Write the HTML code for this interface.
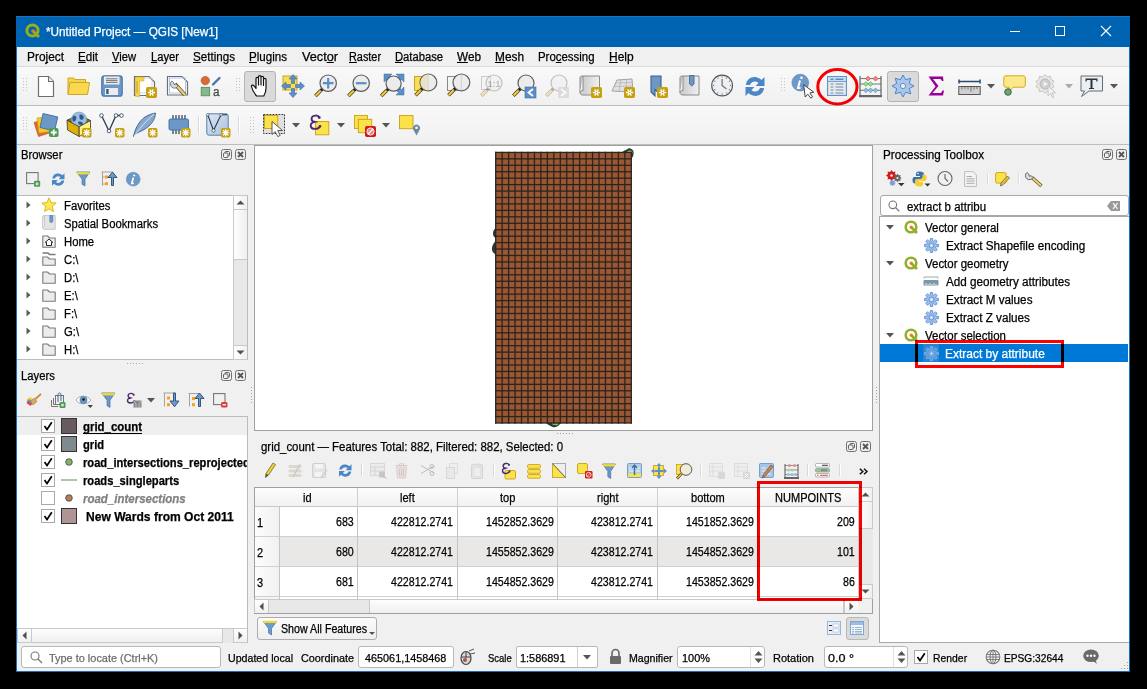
<!DOCTYPE html>
<html><head><meta charset="utf-8"><style>
html,body{margin:0;padding:0;}
body{width:1147px;height:689px;overflow:hidden;background:#000;position:relative;font-family:"Liberation Sans",sans-serif;}
.a{position:absolute;}
.t{position:absolute;transform-origin:0 0;text-decoration-skip-ink:none;-webkit-text-stroke:0.25px currentColor;white-space:nowrap;line-height:1;color:#000;font-family:"Liberation Sans",sans-serif;}
svg.a{overflow:visible;}
</style></head><body>
<div class="a" style="left:16px;top:16px;width:1114px;height:656px;background:#f0f0f0;"></div>
<div class="a" style="left:16px;top:16px;width:1px;height:656px;background:#1a6fc4;"></div>
<div class="a" style="left:1129px;top:16px;width:1px;height:656px;background:#1a6fc4;"></div>
<div class="a" style="left:16px;top:671px;width:1114px;height:1px;background:#1a6fc4;"></div>
<div class="a" style="left:16px;top:16px;width:1114px;height:31px;background:#0063b1;"></div>
<div class="a" style="left:16px;top:16px;width:1114px;height:1px;background:#1b73c2;"></div>
<svg class="a" style="left:25px;top:23px;" width="16" height="16" viewBox="0 0 16 16"><circle cx="7.5" cy="7.5" r="5.6" fill="none" stroke="#93b023" stroke-width="3"/><path d="M8 8 L14 14" stroke="#93b023" stroke-width="3"/><circle cx="8" cy="8" r="1.8" fill="#ee7913"/></svg>
<div class="t" style="left:46px;top:26px;font-size:12px;transform:scaleX(0.9806);color:#fff;">*Untitled Project — QGIS [New1]</div>
<div class="a" style="left:1010px;top:31px;width:10px;height:1px;background:#fff;"></div>
<div class="a" style="left:1055px;top:26px;width:10px;height:10px;border:1px solid #fff;box-sizing:border-box;"></div>
<svg class="a" style="left:1101px;top:26px;" width="10" height="10" viewBox="0 0 10 10"><path d="M0 0 L10 10 M10 0 L0 10" stroke="#fff" stroke-width="1.1"/></svg>
<div class="a" style="left:17px;top:47px;width:1112px;height:19px;background:#f0f0f0;"></div>
<div class="a" style="left:17px;top:66px;width:1112px;height:1px;background:#dadada;"></div>
<div class="t" style="left:27px;top:51px;font-size:12px;transform:scaleX(0.9907);text-decoration-thickness:1px;text-underline-offset:1px;">Pro<u>j</u>ect</div>
<div class="t" style="left:78px;top:51px;font-size:12px;transform:scaleX(0.9672);text-decoration-thickness:1px;text-underline-offset:1px;"><u>E</u>dit</div>
<div class="t" style="left:112px;top:51px;font-size:12px;transform:scaleX(0.9305);text-decoration-thickness:1px;text-underline-offset:1px;"><u>V</u>iew</div>
<div class="t" style="left:151px;top:51px;font-size:12px;transform:scaleX(0.9328);text-decoration-thickness:1px;text-underline-offset:1px;"><u>L</u>ayer</div>
<div class="t" style="left:193px;top:51px;font-size:12px;transform:scaleX(0.9686);text-decoration-thickness:1px;text-underline-offset:1px;"><u>S</u>ettings</div>
<div class="t" style="left:249px;top:51px;font-size:12px;transform:scaleX(0.9655);text-decoration-thickness:1px;text-underline-offset:1px;"><u>P</u>lugins</div>
<div class="t" style="left:302px;top:51px;font-size:12px;transform:scaleX(1.0582);text-decoration-thickness:1px;text-underline-offset:1px;">Vect<u>o</u>r</div>
<div class="t" style="left:349px;top:51px;font-size:12px;transform:scaleX(0.9054);text-decoration-thickness:1px;text-underline-offset:1px;"><u>R</u>aster</div>
<div class="t" style="left:395px;top:51px;font-size:12px;transform:scaleX(0.9344);text-decoration-thickness:1px;text-underline-offset:1px;"><u>D</u>atabase</div>
<div class="t" style="left:457px;top:51px;font-size:12px;transform:scaleX(0.9813);text-decoration-thickness:1px;text-underline-offset:1px;"><u>W</u>eb</div>
<div class="t" style="left:495px;top:51px;font-size:12px;transform:scaleX(0.9883);text-decoration-thickness:1px;text-underline-offset:1px;"><u>M</u>esh</div>
<div class="t" style="left:538px;top:51px;font-size:12px;transform:scaleX(0.9518);text-decoration-thickness:1px;text-underline-offset:1px;">Pro<u>c</u>essing</div>
<div class="t" style="left:609px;top:51px;font-size:12px;transform:scaleX(0.9968);text-decoration-thickness:1px;text-underline-offset:1px;"><u>H</u>elp</div>
<div class="a" style="left:17px;top:67px;width:1112px;height:38px;background:linear-gradient(#f9f9f9,#f0f0f0);"></div>
<div class="a" style="left:17px;top:105px;width:1112px;height:1px;background:#bdbdbd;"></div>
<div class="a" style="left:17px;top:106px;width:1112px;height:38px;background:linear-gradient(#f9f9f9,#f0f0f0);"></div>
<div class="a" style="left:17px;top:144px;width:1112px;height:1px;background:#bdbdbd;"></div>
<div class="t" style="left:21px;top:149px;font-size:12px;transform:scaleX(0.9407);">Browser</div>
<svg class="a" style="left:221px;top:149px;" width="11" height="11" viewBox="0 0 11 11"><rect x="0.5" y="0.5" width="10" height="10" rx="2" fill="none" stroke="#707070"/><rect x="4" y="2.5" width="4.5" height="4.5" rx="1" fill="none" stroke="#606060"/><rect x="2.5" y="4" width="4.5" height="4.5" rx="1" fill="#f0f0f0" stroke="#606060"/></svg>
<svg class="a" style="left:235px;top:149px;" width="11" height="11" viewBox="0 0 11 11"><rect x="0.5" y="0.5" width="10" height="10" rx="2" fill="none" stroke="#707070"/><path d="M3 3 L8 8 M8 3 L3 8" stroke="#555" stroke-width="1.8"/></svg>
<div class="a" style="left:17px;top:195px;width:231px;height:165px;background:#fff;border:1px solid #bcbcbc;border-left:none;box-sizing:border-box;"></div>
<svg class="a" style="left:26px;top:201px;" width="5" height="8" viewBox="0 0 5 8"><path d="M0.5 0.5 L4.5 4 L0.5 7.5Z" fill="#5a5a5a"/></svg>
<div class="t" style="left:63.5px;top:200px;font-size:12px;transform:scaleX(0.9400);">Favorites</div>
<svg class="a" style="left:26px;top:219px;" width="5" height="8" viewBox="0 0 5 8"><path d="M0.5 0.5 L4.5 4 L0.5 7.5Z" fill="#5a5a5a"/></svg>
<div class="t" style="left:63.5px;top:218px;font-size:12px;transform:scaleX(0.9400);">Spatial Bookmarks</div>
<svg class="a" style="left:26px;top:237px;" width="5" height="8" viewBox="0 0 5 8"><path d="M0.5 0.5 L4.5 4 L0.5 7.5Z" fill="#5a5a5a"/></svg>
<div class="t" style="left:63.5px;top:236px;font-size:12px;transform:scaleX(0.9400);">Home</div>
<svg class="a" style="left:26px;top:255px;" width="5" height="8" viewBox="0 0 5 8"><path d="M0.5 0.5 L4.5 4 L0.5 7.5Z" fill="#5a5a5a"/></svg>
<div class="t" style="left:63.5px;top:254px;font-size:12px;transform:scaleX(0.9400);">C:\</div>
<svg class="a" style="left:26px;top:273px;" width="5" height="8" viewBox="0 0 5 8"><path d="M0.5 0.5 L4.5 4 L0.5 7.5Z" fill="#5a5a5a"/></svg>
<div class="t" style="left:63.5px;top:272px;font-size:12px;transform:scaleX(0.9400);">D:\</div>
<svg class="a" style="left:26px;top:291px;" width="5" height="8" viewBox="0 0 5 8"><path d="M0.5 0.5 L4.5 4 L0.5 7.5Z" fill="#5a5a5a"/></svg>
<div class="t" style="left:63.5px;top:290px;font-size:12px;transform:scaleX(0.9400);">E:\</div>
<svg class="a" style="left:26px;top:309px;" width="5" height="8" viewBox="0 0 5 8"><path d="M0.5 0.5 L4.5 4 L0.5 7.5Z" fill="#5a5a5a"/></svg>
<div class="t" style="left:63.5px;top:308px;font-size:12px;transform:scaleX(0.9400);">F:\</div>
<svg class="a" style="left:26px;top:327px;" width="5" height="8" viewBox="0 0 5 8"><path d="M0.5 0.5 L4.5 4 L0.5 7.5Z" fill="#5a5a5a"/></svg>
<div class="t" style="left:63.5px;top:326px;font-size:12px;transform:scaleX(0.9400);">G:\</div>
<svg class="a" style="left:26px;top:345px;" width="5" height="8" viewBox="0 0 5 8"><path d="M0.5 0.5 L4.5 4 L0.5 7.5Z" fill="#5a5a5a"/></svg>
<div class="t" style="left:63.5px;top:344px;font-size:12px;transform:scaleX(0.9400);">H:\</div>
<svg class="a" style="left:41px;top:197px;" width="16" height="16" viewBox="0 0 16 16"><path d="M8 0.8 L10.1 5.6 L15.2 6 L11.3 9.3 L12.5 14.6 L8 11.8 L3.5 14.6 L4.7 9.3 L0.8 6 L5.9 5.6Z" fill="#fce94f" stroke="#d8b01a" stroke-width="0.9" stroke-linejoin="round"/></svg>
<svg class="a" style="left:42px;top:215px;" width="14" height="15" viewBox="0 0 14 15"><path d="M2.5 0.5 H13.2 V14.3 H2.5 C1.2 14.3 0.6 13.6 0.6 12.5 V1.8 C0.6 1 1.2 0.5 2 0.5Z" fill="#e4e4e4" stroke="#c4c4c4" stroke-width="0.9"/><path d="M0.6 12.5 C0.6 11.5 1.2 11 2.5 11 V0.5" fill="#f4f4f4" stroke="#c4c4c4" stroke-width="0.9"/><path d="M7.8 0.5 H10.8 V6.5 L9.3 8 L7.8 6.5Z" fill="#6c98c8" stroke="#4a77aa" stroke-width="0.6"/></svg>
<svg class="a" style="left:42px;top:235px;" width="14" height="13" viewBox="0 0 14 13"><path d="M0.8 12.2 V1 H5.5 L7.5 3 H13.2 V12.2Z" fill="#f0f0f0" stroke="#7a7a7a" stroke-width="1.1" stroke-linejoin="round"/><path d="M4.5 10.5 V7.3 H3.3 L7 4 L10.7 7.3 H9.5 V10.5Z" fill="#fff" stroke="#111" stroke-width="0.9" stroke-linejoin="round"/></svg>
<svg class="a" style="left:42px;top:252px;" width="14" height="14" viewBox="0 0 14 14"><path d="M0.5 1 H6 L7.5 2.5 H13.5" fill="none" stroke="#7a7a7a" stroke-width="1.6"/><path d="M0.8 13.2 V5 H5.5 L7.5 7 H13.2 V13.2Z" fill="#ececec" stroke="#7a7a7a" stroke-width="1.1" stroke-linejoin="round"/></svg>
<svg class="a" style="left:42px;top:271px;" width="14" height="13" viewBox="0 0 14 13"><path d="M0.8 12.2 V1 H5.5 L7.5 3 H13.2 V12.2Z" fill="#ececec" stroke="#7a7a7a" stroke-width="1.1" stroke-linejoin="round"/></svg>
<svg class="a" style="left:42px;top:289px;" width="14" height="13" viewBox="0 0 14 13"><path d="M0.8 12.2 V1 H5.5 L7.5 3 H13.2 V12.2Z" fill="#ececec" stroke="#7a7a7a" stroke-width="1.1" stroke-linejoin="round"/></svg>
<svg class="a" style="left:42px;top:307px;" width="14" height="13" viewBox="0 0 14 13"><path d="M0.8 12.2 V1 H5.5 L7.5 3 H13.2 V12.2Z" fill="#ececec" stroke="#7a7a7a" stroke-width="1.1" stroke-linejoin="round"/></svg>
<svg class="a" style="left:42px;top:325px;" width="14" height="13" viewBox="0 0 14 13"><path d="M0.8 12.2 V1 H5.5 L7.5 3 H13.2 V12.2Z" fill="#ececec" stroke="#7a7a7a" stroke-width="1.1" stroke-linejoin="round"/></svg>
<svg class="a" style="left:42px;top:343px;" width="14" height="13" viewBox="0 0 14 13"><path d="M0.8 12.2 V1 H5.5 L7.5 3 H13.2 V12.2Z" fill="#ececec" stroke="#7a7a7a" stroke-width="1.1" stroke-linejoin="round"/></svg>
<div class="a" style="left:233px;top:195px;width:15px;height:165px;background:#e8e8e8;border-left:1px solid #c9c9c9;box-sizing:border-box;"></div>
<div class="a" style="left:233px;top:195px;width:15px;height:15px;background:linear-gradient(90deg,#fff,#f0f0f0);border:1px solid #c9c9c9;box-sizing:border-box;"></div>
<svg class="a" style="left:236px;top:200px;" width="9" height="5" viewBox="0 0 9 5"><path d="M0.5 4.5 L4.5 0.5 L8.5 4.5Z" fill="#505050"/></svg>
<div class="a" style="left:233px;top:345px;width:15px;height:15px;background:linear-gradient(90deg,#fff,#f0f0f0);border:1px solid #c9c9c9;box-sizing:border-box;"></div>
<svg class="a" style="left:236px;top:350px;" width="9" height="5" viewBox="0 0 9 5"><path d="M0.5 0.5 L4.5 4.5 L8.5 0.5Z" fill="#505050"/></svg>
<div class="a" style="left:233px;top:209px;width:15px;height:51px;background:linear-gradient(90deg,#fdfdfd,#f0f0f0);border:1px solid #c9c9c9;box-sizing:border-box;"></div>
<div class="a" style="left:247px;top:195px;width:1px;height:165px;background:#bcbcbc;"></div>
<div class="a" style="left:127px;top:363px;width:1px;height:1px;background:#a8a8a8;"></div>
<div class="a" style="left:130px;top:363px;width:1px;height:1px;background:#a8a8a8;"></div>
<div class="a" style="left:133px;top:363px;width:1px;height:1px;background:#a8a8a8;"></div>
<div class="a" style="left:136px;top:363px;width:1px;height:1px;background:#a8a8a8;"></div>
<div class="a" style="left:139px;top:363px;width:1px;height:1px;background:#a8a8a8;"></div>
<div class="a" style="left:142px;top:363px;width:1px;height:1px;background:#a8a8a8;"></div>
<div class="t" style="left:21px;top:370px;font-size:12px;transform:scaleX(0.9400);">Layers</div>
<svg class="a" style="left:221px;top:370px;" width="11" height="11" viewBox="0 0 11 11"><rect x="0.5" y="0.5" width="10" height="10" rx="2" fill="none" stroke="#707070"/><rect x="4" y="2.5" width="4.5" height="4.5" rx="1" fill="none" stroke="#606060"/><rect x="2.5" y="4" width="4.5" height="4.5" rx="1" fill="#f0f0f0" stroke="#606060"/></svg>
<svg class="a" style="left:235px;top:370px;" width="11" height="11" viewBox="0 0 11 11"><rect x="0.5" y="0.5" width="10" height="10" rx="2" fill="none" stroke="#707070"/><path d="M3 3 L8 8 M8 3 L3 8" stroke="#555" stroke-width="1.8"/></svg>
<div class="a" style="left:17px;top:416px;width:231px;height:227px;background:#fff;border:1px solid #bcbcbc;border-left:none;border-bottom:none;box-sizing:border-box;"></div>
<div class="a" style="left:17px;top:417px;width:230px;height:18px;background:#efefef;"></div>
<div class="a" style="left:0;top:0;width:1147px;height:689px;clip-path:inset(417px 900px 61px 17px);">
<div class="a" style="left:41px;top:419px;width:14px;height:14px;background:#fff;border:1px solid #a8a8a8;box-sizing:border-box;"></div>
<svg class="a" style="left:43px;top:421px;" width="10" height="10" viewBox="0 0 10 10"><path d="M1.5 5 L4 8.5 L8.8 1.2" fill="none" stroke="#000" stroke-width="1.7"/></svg>
<div class="a" style="left:61px;top:418px;width:16px;height:16px;background:#675b5d;border:1px solid #333;box-sizing:border-box;"></div>
<div class="t" style="left:83px;top:421px;font-size:12px;transform:scaleX(0.9517);font-weight:bold;text-decoration-thickness:1px;text-underline-offset:1.5px;"><u>grid_count</u></div>
<div class="a" style="left:41px;top:437px;width:14px;height:14px;background:#fff;border:1px solid #a8a8a8;box-sizing:border-box;"></div>
<svg class="a" style="left:43px;top:439px;" width="10" height="10" viewBox="0 0 10 10"><path d="M1.5 5 L4 8.5 L8.8 1.2" fill="none" stroke="#000" stroke-width="1.7"/></svg>
<div class="a" style="left:61px;top:436px;width:16px;height:16px;background:#7e8a8e;border:1px solid #333;box-sizing:border-box;"></div>
<div class="t" style="left:83px;top:439px;font-size:12px;transform:scaleX(0.9300);font-weight:bold;">grid</div>
<div class="a" style="left:41px;top:455px;width:14px;height:14px;background:#fff;border:1px solid #a8a8a8;box-sizing:border-box;"></div>
<svg class="a" style="left:43px;top:457px;" width="10" height="10" viewBox="0 0 10 10"><path d="M1.5 5 L4 8.5 L8.8 1.2" fill="none" stroke="#000" stroke-width="1.7"/></svg>
<svg class="a" style="left:65px;top:458px;" width="8" height="8" viewBox="0 0 8 8"><circle cx="4" cy="4" r="3.3" fill="#80b36a" stroke="#444" stroke-width="0.8"/></svg>
<div class="t" style="left:83px;top:457px;font-size:12px;transform:scaleX(0.9300);font-weight:bold;">road_intersections_reprojected</div>
<div class="a" style="left:41px;top:473px;width:14px;height:14px;background:#fff;border:1px solid #a8a8a8;box-sizing:border-box;"></div>
<svg class="a" style="left:43px;top:475px;" width="10" height="10" viewBox="0 0 10 10"><path d="M1.5 5 L4 8.5 L8.8 1.2" fill="none" stroke="#000" stroke-width="1.7"/></svg>
<div class="a" style="left:61px;top:479px;width:16px;height:2px;background:#a9c8a8;"></div>
<div class="t" style="left:83px;top:475px;font-size:12px;transform:scaleX(0.9300);font-weight:bold;">roads_singleparts</div>
<div class="a" style="left:41px;top:491px;width:14px;height:14px;background:#fff;border:1px solid #a8a8a8;box-sizing:border-box;"></div>
<svg class="a" style="left:65px;top:494px;" width="8" height="8" viewBox="0 0 8 8"><circle cx="4" cy="4" r="3.3" fill="#b47a5a" stroke="#444" stroke-width="0.8"/></svg>
<div class="t" style="left:83px;top:493px;font-size:12px;transform:scaleX(0.9570);color:#808080;font-weight:bold;font-style:italic;">road_intersections</div>
<div class="a" style="left:41px;top:509px;width:14px;height:14px;background:#fff;border:1px solid #a8a8a8;box-sizing:border-box;"></div>
<svg class="a" style="left:43px;top:511px;" width="10" height="10" viewBox="0 0 10 10"><path d="M1.5 5 L4 8.5 L8.8 1.2" fill="none" stroke="#000" stroke-width="1.7"/></svg>
<div class="a" style="left:61px;top:508px;width:16px;height:16px;background:#b09393;border:1px solid #333;box-sizing:border-box;"></div>
<div class="t" style="left:86.3px;top:511px;font-size:12px;transform:scaleX(1.0052);font-weight:bold;">New Wards from Oct 2011</div>
</div>
<div class="a" style="left:17px;top:628px;width:231px;height:15px;background:#e8e8e8;border-top:1px solid #c9c9c9;box-sizing:border-box;"></div>
<div class="a" style="left:31px;top:628px;width:192px;height:15px;background:linear-gradient(#fdfdfd,#f0f0f0);border:1px solid #c9c9c9;box-sizing:border-box;"></div>
<div class="a" style="left:17px;top:628px;width:15px;height:15px;background:linear-gradient(#fff,#f0f0f0);border:1px solid #c9c9c9;box-sizing:border-box;"></div>
<svg class="a" style="left:22px;top:631px;" width="5" height="9" viewBox="0 0 5 9"><path d="M4.5 0.5 L0.5 4.5 L4.5 8.5Z" fill="#505050"/></svg>
<div class="a" style="left:233px;top:628px;width:15px;height:15px;background:linear-gradient(#fff,#f0f0f0);border:1px solid #c9c9c9;box-sizing:border-box;"></div>
<svg class="a" style="left:238px;top:631px;" width="5" height="9" viewBox="0 0 5 9"><path d="M0.5 0.5 L4.5 4.5 L0.5 8.5Z" fill="#505050"/></svg>
<div class="a" style="left:247px;top:416px;width:1px;height:227px;background:#bcbcbc;"></div>
<div class="a" style="left:254px;top:145px;width:619px;height:286px;background:#fff;border:1px solid #a0a0a0;box-sizing:border-box;"></div>
<svg class="a" style="left:620px;top:146px;" width="16" height="14" viewBox="0 0 16 14"><path d="M1.5 7 C3 5 5 4 7 3.5 C8 2 10 1.8 11.5 3 C13.5 4 14 6 13.5 8 C13.5 10 12.5 11.5 11.8 12 L11.5 6.8 Z" fill="#2f3a2f"/><path d="M6.5 6.2 C8 4.5 10 3.8 11.8 5 C12.5 5.8 12.6 6.5 12.3 7 H6.5Z" fill="#86c86a"/></svg>
<svg class="a" style="left:491px;top:226px;" width="6" height="30" viewBox="0 0 6 30"><path d="M5 2 C2 4 1.5 7 2.5 10 C3 11 4 11.5 5 12Z M5 15 C2 17 0.5 21 1 24 C1.5 26 3 27.5 5 28.5Z" fill="#2e3a30"/></svg>
<svg class="a" style="left:545px;top:418px;" width="17" height="11" viewBox="0 0 17 11"><path d="M1.5 5 C3 7 6 8.5 8.5 9.2 C11 9.5 13.5 8 15 6 L14.5 4 H2Z" fill="#2e3a30"/><path d="M7 6.3 C9 7.5 11.5 7.8 13.2 6.5 L12.8 5 H7Z" fill="#7cc06a"/></svg>
<svg class="a" style="left:494px;top:151px;" width="140" height="275" viewBox="0 0 140 275"><rect x="1.70" y="1.40" width="135.60" height="270.60" fill="#9b5731"/><rect x="1.05" y="0.75" width="1.3" height="271.90" fill="#2b2421"/><rect x="7.51" y="0.75" width="1.3" height="271.90" fill="#2b2421"/><rect x="13.96" y="0.75" width="1.3" height="271.90" fill="#2b2421"/><rect x="20.42" y="0.75" width="1.3" height="271.90" fill="#2b2421"/><rect x="26.88" y="0.75" width="1.3" height="271.90" fill="#2b2421"/><rect x="33.34" y="0.75" width="1.3" height="271.90" fill="#2b2421"/><rect x="39.79" y="0.75" width="1.3" height="271.90" fill="#2b2421"/><rect x="46.25" y="0.75" width="1.3" height="271.90" fill="#2b2421"/><rect x="52.71" y="0.75" width="1.3" height="271.90" fill="#2b2421"/><rect x="59.16" y="0.75" width="1.3" height="271.90" fill="#2b2421"/><rect x="65.62" y="0.75" width="1.3" height="271.90" fill="#2b2421"/><rect x="72.08" y="0.75" width="1.3" height="271.90" fill="#2b2421"/><rect x="78.54" y="0.75" width="1.3" height="271.90" fill="#2b2421"/><rect x="84.99" y="0.75" width="1.3" height="271.90" fill="#2b2421"/><rect x="91.45" y="0.75" width="1.3" height="271.90" fill="#2b2421"/><rect x="97.91" y="0.75" width="1.3" height="271.90" fill="#2b2421"/><rect x="104.36" y="0.75" width="1.3" height="271.90" fill="#2b2421"/><rect x="110.82" y="0.75" width="1.3" height="271.90" fill="#2b2421"/><rect x="117.28" y="0.75" width="1.3" height="271.90" fill="#2b2421"/><rect x="123.74" y="0.75" width="1.3" height="271.90" fill="#2b2421"/><rect x="130.19" y="0.75" width="1.3" height="271.90" fill="#2b2421"/><rect x="136.65" y="0.75" width="1.3" height="271.90" fill="#2b2421"/><rect x="1.05" y="0.75" width="136.90" height="1.3" fill="#2b2421"/><rect x="1.05" y="7.19" width="136.90" height="1.3" fill="#2b2421"/><rect x="1.05" y="13.64" width="136.90" height="1.3" fill="#2b2421"/><rect x="1.05" y="20.08" width="136.90" height="1.3" fill="#2b2421"/><rect x="1.05" y="26.52" width="136.90" height="1.3" fill="#2b2421"/><rect x="1.05" y="32.96" width="136.90" height="1.3" fill="#2b2421"/><rect x="1.05" y="39.41" width="136.90" height="1.3" fill="#2b2421"/><rect x="1.05" y="45.85" width="136.90" height="1.3" fill="#2b2421"/><rect x="1.05" y="52.29" width="136.90" height="1.3" fill="#2b2421"/><rect x="1.05" y="58.74" width="136.90" height="1.3" fill="#2b2421"/><rect x="1.05" y="65.18" width="136.90" height="1.3" fill="#2b2421"/><rect x="1.05" y="71.62" width="136.90" height="1.3" fill="#2b2421"/><rect x="1.05" y="78.06" width="136.90" height="1.3" fill="#2b2421"/><rect x="1.05" y="84.51" width="136.90" height="1.3" fill="#2b2421"/><rect x="1.05" y="90.95" width="136.90" height="1.3" fill="#2b2421"/><rect x="1.05" y="97.39" width="136.90" height="1.3" fill="#2b2421"/><rect x="1.05" y="103.84" width="136.90" height="1.3" fill="#2b2421"/><rect x="1.05" y="110.28" width="136.90" height="1.3" fill="#2b2421"/><rect x="1.05" y="116.72" width="136.90" height="1.3" fill="#2b2421"/><rect x="1.05" y="123.16" width="136.90" height="1.3" fill="#2b2421"/><rect x="1.05" y="129.61" width="136.90" height="1.3" fill="#2b2421"/><rect x="1.05" y="136.05" width="136.90" height="1.3" fill="#2b2421"/><rect x="1.05" y="142.49" width="136.90" height="1.3" fill="#2b2421"/><rect x="1.05" y="148.94" width="136.90" height="1.3" fill="#2b2421"/><rect x="1.05" y="155.38" width="136.90" height="1.3" fill="#2b2421"/><rect x="1.05" y="161.82" width="136.90" height="1.3" fill="#2b2421"/><rect x="1.05" y="168.26" width="136.90" height="1.3" fill="#2b2421"/><rect x="1.05" y="174.71" width="136.90" height="1.3" fill="#2b2421"/><rect x="1.05" y="181.15" width="136.90" height="1.3" fill="#2b2421"/><rect x="1.05" y="187.59" width="136.90" height="1.3" fill="#2b2421"/><rect x="1.05" y="194.04" width="136.90" height="1.3" fill="#2b2421"/><rect x="1.05" y="200.48" width="136.90" height="1.3" fill="#2b2421"/><rect x="1.05" y="206.92" width="136.90" height="1.3" fill="#2b2421"/><rect x="1.05" y="213.36" width="136.90" height="1.3" fill="#2b2421"/><rect x="1.05" y="219.81" width="136.90" height="1.3" fill="#2b2421"/><rect x="1.05" y="226.25" width="136.90" height="1.3" fill="#2b2421"/><rect x="1.05" y="232.69" width="136.90" height="1.3" fill="#2b2421"/><rect x="1.05" y="239.14" width="136.90" height="1.3" fill="#2b2421"/><rect x="1.05" y="245.58" width="136.90" height="1.3" fill="#2b2421"/><rect x="1.05" y="252.02" width="136.90" height="1.3" fill="#2b2421"/><rect x="1.05" y="258.46" width="136.90" height="1.3" fill="#2b2421"/><rect x="1.05" y="264.91" width="136.90" height="1.3" fill="#2b2421"/><rect x="1.05" y="271.35" width="136.90" height="1.3" fill="#2b2421"/></svg>
<div class="a" style="left:557px;top:433px;width:1px;height:1px;background:#a0a0a0;"></div>
<div class="a" style="left:251px;top:387px;width:1px;height:1px;background:#a0a0a0;"></div>
<div class="a" style="left:876px;top:387px;width:1px;height:1px;background:#a0a0a0;"></div>
<div class="a" style="left:560px;top:433px;width:1px;height:1px;background:#a0a0a0;"></div>
<div class="a" style="left:251px;top:390px;width:1px;height:1px;background:#a0a0a0;"></div>
<div class="a" style="left:876px;top:390px;width:1px;height:1px;background:#a0a0a0;"></div>
<div class="a" style="left:563px;top:433px;width:1px;height:1px;background:#a0a0a0;"></div>
<div class="a" style="left:251px;top:393px;width:1px;height:1px;background:#a0a0a0;"></div>
<div class="a" style="left:876px;top:393px;width:1px;height:1px;background:#a0a0a0;"></div>
<div class="a" style="left:566px;top:433px;width:1px;height:1px;background:#a0a0a0;"></div>
<div class="a" style="left:251px;top:396px;width:1px;height:1px;background:#a0a0a0;"></div>
<div class="a" style="left:876px;top:396px;width:1px;height:1px;background:#a0a0a0;"></div>
<div class="a" style="left:569px;top:433px;width:1px;height:1px;background:#a0a0a0;"></div>
<div class="a" style="left:251px;top:399px;width:1px;height:1px;background:#a0a0a0;"></div>
<div class="a" style="left:876px;top:399px;width:1px;height:1px;background:#a0a0a0;"></div>
<div class="a" style="left:572px;top:433px;width:1px;height:1px;background:#a0a0a0;"></div>
<div class="a" style="left:251px;top:402px;width:1px;height:1px;background:#a0a0a0;"></div>
<div class="a" style="left:876px;top:402px;width:1px;height:1px;background:#a0a0a0;"></div>
<div class="t" style="left:261.4px;top:440.5px;font-size:12px;transform:scaleX(0.9518);">grid_count — Features Total: 882, Filtered: 882, Selected: 0</div>
<svg class="a" style="left:846px;top:441px;" width="11" height="11" viewBox="0 0 11 11"><rect x="0.5" y="0.5" width="10" height="10" rx="2" fill="none" stroke="#707070"/><rect x="4" y="2.5" width="4.5" height="4.5" rx="1" fill="none" stroke="#606060"/><rect x="2.5" y="4" width="4.5" height="4.5" rx="1" fill="#f0f0f0" stroke="#606060"/></svg>
<svg class="a" style="left:860px;top:441px;" width="11" height="11" viewBox="0 0 11 11"><rect x="0.5" y="0.5" width="10" height="10" rx="2" fill="none" stroke="#707070"/><path d="M3 3 L8 8 M8 3 L3 8" stroke="#555" stroke-width="1.8"/></svg>
<div class="a" style="left:254px;top:487px;width:619px;height:127px;background:#fff;border:1px solid #a0a0a0;box-sizing:border-box;"></div>
<div class="a" style="left:255px;top:488px;width:603px;height:19px;background:linear-gradient(#fdfdfd,#f1f1f1);"></div>
<div class="a" style="left:255px;top:506px;width:603px;height:1px;background:#c8c8c8;"></div>
<div class="t" style="left:303.40403125px;top:492px;font-size:12px;transform:scaleX(0.9200);">id</div>
<div class="a" style="left:357px;top:488px;width:1px;height:108px;background:#d0d0d0;"></div>
<div class="t" style="left:400.13640625px;top:492px;font-size:12px;transform:scaleX(0.9200);">left</div>
<div class="a" style="left:457px;top:488px;width:1px;height:108px;background:#d0d0d0;"></div>
<div class="t" style="left:499.826625px;top:492px;font-size:12px;transform:scaleX(0.9200);">top</div>
<div class="a" style="left:557px;top:488px;width:1px;height:108px;background:#d0d0d0;"></div>
<div class="t" style="left:596.761875px;top:492px;font-size:12px;transform:scaleX(0.9200);">right</div>
<div class="a" style="left:657px;top:488px;width:1px;height:108px;background:#d0d0d0;"></div>
<div class="t" style="left:690.62446875px;top:492px;font-size:12px;transform:scaleX(0.9200);">bottom</div>
<div class="a" style="left:757px;top:488px;width:1px;height:108px;background:#d0d0d0;"></div>
<div class="t" style="left:774.87928125px;top:492px;font-size:12px;transform:scaleX(0.9200);">NUMPOINTS</div>
<div class="a" style="left:255px;top:507px;width:24px;height:89px;background:linear-gradient(90deg,#fdfdfd,#f1f1f1);"></div>
<div class="a" style="left:255px;top:536px;width:603px;height:1px;background:#d0d0d0;"></div>
<div class="t" style="left:257px;top:517px;font-size:12px;transform:scaleX(0.9200);">1</div>
<div class="t" style="left:335.7820234375px;top:516px;font-size:12px;transform:scaleX(0.8850);">683</div>
<div class="t" style="left:391.48915625px;top:516px;font-size:12px;transform:scaleX(0.8850);">422812.2741</div>
<div class="t" style="left:485.58316406250003px;top:516px;font-size:12px;transform:scaleX(0.8850);">1452852.3629</div>
<div class="t" style="left:591.48915625px;top:516px;font-size:12px;transform:scaleX(0.8850);">423812.2741</div>
<div class="t" style="left:685.5831640625px;top:516px;font-size:12px;transform:scaleX(0.8850);">1451852.3629</div>
<div class="t" style="left:836.7820234375px;top:516px;font-size:12px;transform:scaleX(0.8850);">209</div>
<div class="a" style="left:279px;top:537px;width:579px;height:29px;background:#e9e8e6;"></div>
<div class="a" style="left:255px;top:566px;width:603px;height:1px;background:#d0d0d0;"></div>
<div class="t" style="left:257px;top:547px;font-size:12px;transform:scaleX(0.9200);">2</div>
<div class="t" style="left:335.7820234375px;top:546px;font-size:12px;transform:scaleX(0.8850);">680</div>
<div class="t" style="left:391.48915625px;top:546px;font-size:12px;transform:scaleX(0.8850);">422812.2741</div>
<div class="t" style="left:485.58316406250003px;top:546px;font-size:12px;transform:scaleX(0.8850);">1455852.3629</div>
<div class="t" style="left:591.48915625px;top:546px;font-size:12px;transform:scaleX(0.8850);">423812.2741</div>
<div class="t" style="left:685.5831640625px;top:546px;font-size:12px;transform:scaleX(0.8850);">1454852.3629</div>
<div class="t" style="left:836.7820234375px;top:546px;font-size:12px;transform:scaleX(0.8850);">101</div>
<div class="a" style="left:255px;top:596px;width:603px;height:1px;background:#d0d0d0;"></div>
<div class="t" style="left:257px;top:577px;font-size:12px;transform:scaleX(0.9200);">3</div>
<div class="t" style="left:335.7820234375px;top:576px;font-size:12px;transform:scaleX(0.8850);">681</div>
<div class="t" style="left:391.48915625px;top:576px;font-size:12px;transform:scaleX(0.8850);">422812.2741</div>
<div class="t" style="left:485.58316406250003px;top:576px;font-size:12px;transform:scaleX(0.8850);">1454852.3629</div>
<div class="t" style="left:591.48915625px;top:576px;font-size:12px;transform:scaleX(0.8850);">423812.2741</div>
<div class="t" style="left:685.5831640625px;top:576px;font-size:12px;transform:scaleX(0.8850);">1453852.3629</div>
<div class="t" style="left:842.688015625px;top:576px;font-size:12px;transform:scaleX(0.8850);">86</div>
<div class="a" style="left:279px;top:507px;width:1px;height:92px;background:#c4c4c4;"></div>
<div class="a" style="left:357px;top:507px;width:1px;height:92px;background:#c4c4c4;"></div>
<div class="a" style="left:457px;top:507px;width:1px;height:92px;background:#c4c4c4;"></div>
<div class="a" style="left:557px;top:507px;width:1px;height:92px;background:#c4c4c4;"></div>
<div class="a" style="left:657px;top:507px;width:1px;height:92px;background:#c4c4c4;"></div>
<div class="a" style="left:757px;top:507px;width:1px;height:92px;background:#c4c4c4;"></div>
<div class="a" style="left:255px;top:597px;width:24px;height:2px;background:#f4f4f4;"></div>
<div class="a" style="left:858px;top:487px;width:15px;height:112px;background:#e8e8e8;border-left:1px solid #c9c9c9;box-sizing:border-box;"></div>
<div class="a" style="left:858px;top:487px;width:15px;height:15px;background:linear-gradient(90deg,#fff,#f0f0f0);border:1px solid #c9c9c9;box-sizing:border-box;"></div>
<svg class="a" style="left:861px;top:492px;" width="9" height="5" viewBox="0 0 9 5"><path d="M0.5 4.5 L4.5 0.5 L8.5 4.5Z" fill="#505050"/></svg>
<div class="a" style="left:858px;top:584px;width:15px;height:15px;background:linear-gradient(90deg,#fff,#f0f0f0);border:1px solid #c9c9c9;box-sizing:border-box;"></div>
<svg class="a" style="left:861px;top:589px;" width="9" height="5" viewBox="0 0 9 5"><path d="M0.5 0.5 L4.5 4.5 L8.5 0.5Z" fill="#505050"/></svg>
<div class="a" style="left:858px;top:501px;width:15px;height:28px;background:linear-gradient(90deg,#fdfdfd,#f0f0f0);border:1px solid #c9c9c9;box-sizing:border-box;"></div>
<div class="a" style="left:254px;top:599px;width:605px;height:15px;background:#e8e8e8;border-top:1px solid #c9c9c9;box-sizing:border-box;"></div>
<div class="a" style="left:369px;top:599px;width:475px;height:15px;background:linear-gradient(#fdfdfd,#f0f0f0);border:1px solid #c9c9c9;box-sizing:border-box;"></div>
<div class="a" style="left:254px;top:599px;width:15px;height:15px;background:linear-gradient(#fff,#f0f0f0);border:1px solid #c9c9c9;box-sizing:border-box;"></div>
<svg class="a" style="left:259px;top:602px;" width="5" height="9" viewBox="0 0 5 9"><path d="M4.5 0.5 L0.5 4.5 L4.5 8.5Z" fill="#505050"/></svg>
<div class="a" style="left:844px;top:599px;width:15px;height:15px;background:linear-gradient(#fff,#f0f0f0);border:1px solid #c9c9c9;box-sizing:border-box;"></div>
<svg class="a" style="left:849px;top:602px;" width="5" height="9" viewBox="0 0 5 9"><path d="M0.5 0.5 L4.5 4.5 L0.5 8.5Z" fill="#505050"/></svg>
<div class="a" style="left:858px;top:599px;width:14px;height:14px;background:#f0f0f0;"></div>
<div class="a" style="left:254px;top:613px;width:619px;height:1px;background:#a0a0a0;"></div>
<div class="a" style="left:257px;top:617px;width:120px;height:23px;background:linear-gradient(#fbfbfb,#efefef);border:1px solid #adadad;border-radius:3px;box-sizing:border-box;"></div>
<svg class="a" style="left:263px;top:620px;" width="14" height="16" viewBox="0 0 14 16"><path d="M0.5 1.5 H13.5 L8.5 8.5 V15 L5.5 13 V8.5Z" fill="#6f9ccc" stroke="#4a79ad" stroke-width="0.8"/><rect x="0.5" y="0.8" width="13" height="2.2" fill="#f3d82c"/></svg>
<div class="t" style="left:281px;top:623px;font-size:12px;transform:scaleX(0.8892);">Show All Features</div>
<svg class="a" style="left:369px;top:632px;" width="6" height="4" viewBox="0 0 6 4"><path d="M0 0 H6 L3 3Z" fill="#555"/></svg>
<svg class="a" style="left:827px;top:621px;" width="14" height="14" viewBox="0 0 14 14"><rect x="0.5" y="0.5" width="13" height="13" fill="#e8eef5" stroke="#9ab6d6"/><rect x="6" y="3" width="6" height="3" fill="#fff" stroke="#9ab6d6" stroke-width="0.6"/><rect x="6" y="8" width="6" height="3" fill="#fff" stroke="#9ab6d6" stroke-width="0.6"/><path d="M2 4.5h3M2 9.5h3" stroke="#333" stroke-width="1"/></svg>
<div class="a" style="left:846px;top:617px;width:23px;height:23px;background:#dadada;border:1px solid #b8b8b8;border-radius:3px;box-sizing:border-box;"></div>
<svg class="a" style="left:850px;top:621px;" width="14" height="14" viewBox="0 0 14 14"><rect x="0.5" y="0.5" width="13" height="13" fill="#f4f7fb" stroke="#7fa5d0"/><rect x="1" y="1" width="12" height="3" fill="#9dbde0"/><path d="M2 6.5h2M5 6.5h7M2 8.5h2M5 8.5h7M2 10.5h2M5 10.5h7M2 12h2M5 12h7" stroke="#7fa5d0" stroke-width="0.8"/></svg>
<div class="a" style="left:757px;top:481px;width:105px;height:120px;border:3px solid #f00;box-sizing:border-box;mix-blend-mode:multiply;"></div>
<div class="t" style="left:883px;top:149px;font-size:12px;transform:scaleX(0.9727);">Processing Toolbox</div>
<svg class="a" style="left:1102px;top:149px;" width="11" height="11" viewBox="0 0 11 11"><rect x="0.5" y="0.5" width="10" height="10" rx="2" fill="none" stroke="#707070"/><rect x="4" y="2.5" width="4.5" height="4.5" rx="1" fill="none" stroke="#606060"/><rect x="2.5" y="4" width="4.5" height="4.5" rx="1" fill="#f0f0f0" stroke="#606060"/></svg>
<svg class="a" style="left:1116px;top:149px;" width="11" height="11" viewBox="0 0 11 11"><rect x="0.5" y="0.5" width="10" height="10" rx="2" fill="none" stroke="#707070"/><path d="M3 3 L8 8 M8 3 L3 8" stroke="#555" stroke-width="1.8"/></svg>
<div class="a" style="left:880px;top:195px;width:249px;height:21px;background:#fff;border:1px solid #a8a8a8;border-radius:3px;box-sizing:border-box;"></div>
<svg class="a" style="left:888px;top:200px;" width="12" height="12" viewBox="0 0 12 12"><circle cx="4.8" cy="4.8" r="3.8" fill="none" stroke="#777" stroke-width="1.1"/><path d="M7.6 7.6 L11.2 11.2" stroke="#777" stroke-width="1.3"/></svg>
<div class="t" style="left:907px;top:201px;font-size:12px;transform:scaleX(0.9552);">extract b attribu</div>
<svg class="a" style="left:1107px;top:201px;" width="13" height="10" viewBox="0 0 13 10"><path d="M0 5 L4 0 H13 V10 H4Z" fill="#9a9a9a"/><path d="M6 2.2 L10.5 7.8 M10.5 2.2 L6 7.8" stroke="#fff" stroke-width="1.1"/></svg>
<div class="a" style="left:879px;top:216px;width:250px;height:427px;background:#fff;border:1px solid #a8a8a8;border-right:none;box-sizing:border-box;"></div>
<svg class="a" style="left:886px;top:225px;" width="8" height="5" viewBox="0 0 8 5"><path d="M0 0 H8 L4 4.5Z" fill="#555"/></svg>
<svg class="a" style="left:904px;top:220px;" width="15" height="15" viewBox="0 0 15 15"><circle cx="7" cy="7" r="5.3" fill="none" stroke="#8fb02a" stroke-width="2.6"/><path d="M8 8 L13 13" stroke="#8fb02a" stroke-width="2.6"/><circle cx="7.3" cy="7.3" r="1.7" fill="#ee7a14"/></svg>
<div class="t" style="left:925px;top:222px;font-size:12px;transform:scaleX(0.9550);">Vector general</div>
<svg class="a" style="left:923.5px;top:238px;" width="15" height="15" viewBox="0 0 15 15"><polygon points="6.25,3.07 6.25,0.61 8.75,0.61 8.75,3.07 9.75,3.49 11.49,1.75 13.25,3.51 11.51,5.25 11.93,6.25 14.39,6.25 14.39,8.75 11.93,8.75 11.51,9.75 13.25,11.49 11.49,13.25 9.75,11.51 8.75,11.93 8.75,14.39 6.25,14.39 6.25,11.93 5.25,11.51 3.51,13.25 1.75,11.49 3.49,9.75 3.07,8.75 0.61,8.75 0.61,6.25 3.07,6.25 3.49,5.25 1.75,3.51 3.51,1.75 5.25,3.49" fill="#a3c0e8" stroke="#5a8fd6" stroke-width="0.9" stroke-linejoin="round"/><circle cx="7.5" cy="7.5" r="2.6" fill="none" stroke="#5a8fd6" stroke-width="0.9"/><rect x="6.5" y="6.5" width="2" height="2" fill="#fff"/></svg>
<div class="t" style="left:945.5px;top:240px;font-size:12px;transform:scaleX(0.9750);">Extract Shapefile encoding</div>
<svg class="a" style="left:886px;top:261px;" width="8" height="5" viewBox="0 0 8 5"><path d="M0 0 H8 L4 4.5Z" fill="#555"/></svg>
<svg class="a" style="left:904px;top:256px;" width="15" height="15" viewBox="0 0 15 15"><circle cx="7" cy="7" r="5.3" fill="none" stroke="#8fb02a" stroke-width="2.6"/><path d="M8 8 L13 13" stroke="#8fb02a" stroke-width="2.6"/><circle cx="7.3" cy="7.3" r="1.7" fill="#ee7a14"/></svg>
<div class="t" style="left:925px;top:258px;font-size:12px;transform:scaleX(0.9550);">Vector geometry</div>
<svg class="a" style="left:923px;top:276px;" width="16" height="10" viewBox="0 0 16 10"><path d="M1 2.5 V1 H15 V2.5" fill="none" stroke="#9aa" stroke-width="1"/><rect x="0.5" y="4" width="15" height="5.5" rx="1" fill="#7e96aa"/><path d="M3 7v2M5 8v1M7 7v2M9 8v1M11 7v2M13 8v1" stroke="#fff" stroke-width="0.8"/></svg>
<div class="t" style="left:945.5px;top:276px;font-size:12px;transform:scaleX(0.9750);">Add geometry attributes</div>
<svg class="a" style="left:923.5px;top:292px;" width="15" height="15" viewBox="0 0 15 15"><polygon points="6.25,3.07 6.25,0.61 8.75,0.61 8.75,3.07 9.75,3.49 11.49,1.75 13.25,3.51 11.51,5.25 11.93,6.25 14.39,6.25 14.39,8.75 11.93,8.75 11.51,9.75 13.25,11.49 11.49,13.25 9.75,11.51 8.75,11.93 8.75,14.39 6.25,14.39 6.25,11.93 5.25,11.51 3.51,13.25 1.75,11.49 3.49,9.75 3.07,8.75 0.61,8.75 0.61,6.25 3.07,6.25 3.49,5.25 1.75,3.51 3.51,1.75 5.25,3.49" fill="#a3c0e8" stroke="#5a8fd6" stroke-width="0.9" stroke-linejoin="round"/><circle cx="7.5" cy="7.5" r="2.6" fill="none" stroke="#5a8fd6" stroke-width="0.9"/><rect x="6.5" y="6.5" width="2" height="2" fill="#fff"/></svg>
<div class="t" style="left:945.5px;top:294px;font-size:12px;transform:scaleX(0.9750);">Extract M values</div>
<svg class="a" style="left:923.5px;top:310px;" width="15" height="15" viewBox="0 0 15 15"><polygon points="6.25,3.07 6.25,0.61 8.75,0.61 8.75,3.07 9.75,3.49 11.49,1.75 13.25,3.51 11.51,5.25 11.93,6.25 14.39,6.25 14.39,8.75 11.93,8.75 11.51,9.75 13.25,11.49 11.49,13.25 9.75,11.51 8.75,11.93 8.75,14.39 6.25,14.39 6.25,11.93 5.25,11.51 3.51,13.25 1.75,11.49 3.49,9.75 3.07,8.75 0.61,8.75 0.61,6.25 3.07,6.25 3.49,5.25 1.75,3.51 3.51,1.75 5.25,3.49" fill="#a3c0e8" stroke="#5a8fd6" stroke-width="0.9" stroke-linejoin="round"/><circle cx="7.5" cy="7.5" r="2.6" fill="none" stroke="#5a8fd6" stroke-width="0.9"/><rect x="6.5" y="6.5" width="2" height="2" fill="#fff"/></svg>
<div class="t" style="left:945.5px;top:312px;font-size:12px;transform:scaleX(0.9750);">Extract Z values</div>
<svg class="a" style="left:886px;top:333px;" width="8" height="5" viewBox="0 0 8 5"><path d="M0 0 H8 L4 4.5Z" fill="#555"/></svg>
<svg class="a" style="left:904px;top:328px;" width="15" height="15" viewBox="0 0 15 15"><circle cx="7" cy="7" r="5.3" fill="none" stroke="#8fb02a" stroke-width="2.6"/><path d="M8 8 L13 13" stroke="#8fb02a" stroke-width="2.6"/><circle cx="7.3" cy="7.3" r="1.7" fill="#ee7a14"/></svg>
<div class="t" style="left:925px;top:330px;font-size:12px;transform:scaleX(0.9550);">Vector selection</div>
<div class="a" style="left:880px;top:344px;width:248px;height:18px;background:#0078d7;"></div>
<div class="a" style="left:923px;top:344px;width:16px;height:18px;background:#2a85d0;"></div>
<svg class="a" style="left:923.5px;top:346px;opacity:0.9;" width="15" height="15" viewBox="0 0 15 15"><polygon points="6.25,3.07 6.25,0.61 8.75,0.61 8.75,3.07 9.75,3.49 11.49,1.75 13.25,3.51 11.51,5.25 11.93,6.25 14.39,6.25 14.39,8.75 11.93,8.75 11.51,9.75 13.25,11.49 11.49,13.25 9.75,11.51 8.75,11.93 8.75,14.39 6.25,14.39 6.25,11.93 5.25,11.51 3.51,13.25 1.75,11.49 3.49,9.75 3.07,8.75 0.61,8.75 0.61,6.25 3.07,6.25 3.49,5.25 1.75,3.51 3.51,1.75 5.25,3.49" fill="#5c9ee0" stroke="#8ab8ea" stroke-width="0.9" stroke-linejoin="round"/><circle cx="7.5" cy="7.5" r="2.6" fill="none" stroke="#8ab8ea" stroke-width="0.9"/><rect x="6.5" y="6.5" width="2" height="2" fill="#fff"/></svg>
<div class="t" style="left:945px;top:348px;font-size:12px;transform:scaleX(0.9975);color:#fff;">Extract by attribute</div>
<div class="a" style="left:915px;top:340px;width:149px;height:28px;border:3px solid #f00;box-sizing:border-box;mix-blend-mode:multiply;"></div>
<svg class="a" style="left:815px;top:68px;mix-blend-mode:multiply;" width="45" height="39" viewBox="0 0 45 39"><ellipse cx="22.4" cy="18.8" rx="19.6" ry="17.2" fill="none" stroke="#f00" stroke-width="3"/></svg>
<div class="a" style="left:21px;top:646px;width:200px;height:22px;background:#fff;border:1px solid #b8b8b8;border-radius:3px;box-sizing:border-box;"></div>
<svg class="a" style="left:30px;top:651px;" width="13" height="13" viewBox="0 0 13 13"><circle cx="5" cy="5" r="4" fill="none" stroke="#777" stroke-width="1.1"/><path d="M8 8 L12 12" stroke="#777" stroke-width="1.3"/></svg>
<div class="t" style="left:49px;top:653px;font-size:11px;transform:scaleX(0.9933);color:#6d6d6d;">Type to locate (Ctrl+K)</div>
<div class="t" style="left:228px;top:653px;font-size:11px;transform:scaleX(0.9663);">Updated local</div>
<div class="t" style="left:301px;top:653px;font-size:11px;transform:scaleX(0.9849);">Coordinate</div>
<div class="a" style="left:358px;top:646px;width:96px;height:22px;background:#fff;border:1px solid #b8b8b8;border-radius:3px;box-sizing:border-box;"></div>
<div class="t" style="left:365px;top:653px;font-size:11px;transform:scaleX(0.9857);">465061,1458468</div>
<svg class="a" style="left:458px;top:648px;" width="18" height="18" viewBox="0 0 18 18"><ellipse cx="8" cy="10" rx="5" ry="6.5" fill="#d8d8d8" stroke="#444" stroke-width="1.2"/><path d="M8 4 V10 M3.5 9 H12.5" stroke="#444" stroke-width="1"/><path d="M11 3 L16 1 M12 6 L17 5" stroke="#555" stroke-width="1"/><circle cx="7" cy="12" r="2" fill="#b05050"/></svg>
<div class="t" style="left:488px;top:653px;font-size:11px;transform:scaleX(0.8613);">Scale</div>
<div class="a" style="left:516px;top:646px;width:82px;height:22px;background:#fff;border:1px solid #b8b8b8;border-radius:2px;box-sizing:border-box;"></div>
<div class="a" style="left:577px;top:647px;width:1px;height:20px;background:#d0d0d0;"></div>
<svg class="a" style="left:583px;top:655px;" width="8" height="5" viewBox="0 0 8 5"><path d="M0 0 H8 L4 4.5Z" fill="#555"/></svg>
<div class="t" style="left:520px;top:653px;font-size:11px;transform:scaleX(0.9918);">1:586891</div>
<svg class="a" style="left:609px;top:648px;" width="13" height="17" viewBox="0 0 13 17"><path d="M3 8 V5 A3.5 3.5 0 0 1 10 5 V8" fill="none" stroke="#666" stroke-width="1.6"/><rect x="1" y="8" width="11" height="8" rx="1" fill="#6a6a6a"/></svg>
<div class="t" style="left:629px;top:653px;font-size:11px;transform:scaleX(0.9637);">Magnifier</div>
<div class="a" style="left:677px;top:646px;width:88px;height:22px;background:#fff;border:1px solid #b8b8b8;border-radius:3px;box-sizing:border-box;"></div>
<div class="a" style="left:750px;top:647px;width:1px;height:20px;background:#e0e0e0;"></div>
<svg class="a" style="left:754px;top:650px;" width="9" height="14" viewBox="0 0 9 14"><path d="M0.5 5.5 L4.5 1 L8.5 5.5Z M0.5 8.5 L4.5 13 L8.5 8.5Z" fill="#555"/></svg>
<div class="t" style="left:682px;top:653px;font-size:11px;transform:scaleX(0.9953);">100%</div>
<div class="t" style="left:773px;top:653px;font-size:11px;transform:scaleX(0.9983);">Rotation</div>
<div class="a" style="left:824px;top:646px;width:84px;height:22px;background:#fff;border:1px solid #b8b8b8;border-radius:3px;box-sizing:border-box;"></div>
<div class="a" style="left:893px;top:647px;width:1px;height:20px;background:#e0e0e0;"></div>
<svg class="a" style="left:897px;top:650px;" width="9" height="14" viewBox="0 0 9 14"><path d="M0.5 5.5 L4.5 1 L8.5 5.5Z M0.5 8.5 L4.5 13 L8.5 8.5Z" fill="#555"/></svg>
<div class="t" style="left:828px;top:653px;font-size:11px;transform:scaleX(1.1430);">0.0 °</div>
<div class="a" style="left:914px;top:650px;width:14px;height:14px;background:#fff;border:1px solid #a8a8a8;box-sizing:border-box;"></div>
<svg class="a" style="left:916px;top:652px;" width="10" height="10" viewBox="0 0 10 10"><path d="M1.5 5 L4 8.5 L8.8 1.2" fill="none" stroke="#000" stroke-width="1.7"/></svg>
<div class="t" style="left:932.5px;top:653px;font-size:11px;transform:scaleX(0.9452);">Render</div>
<svg class="a" style="left:985px;top:649px;" width="16" height="16" viewBox="0 0 16 16"><circle cx="8" cy="8" r="6.8" fill="none" stroke="#777" stroke-width="1.1"/><ellipse cx="8" cy="8" rx="3" ry="6.8" fill="none" stroke="#777" stroke-width="1"/><path d="M1.5 5.5 H14.5 M1.2 8 H14.8 M1.5 10.5 H14.5 M8 1 V15" stroke="#777" stroke-width="0.9"/></svg>
<div class="t" style="left:1004px;top:653px;font-size:11px;transform:scaleX(0.9251);">EPSG:32644</div>
<svg class="a" style="left:1083px;top:649px;" width="16" height="16" viewBox="0 0 16 16"><ellipse cx="8" cy="6.8" rx="7.8" ry="6.3" fill="#6a6a6a"/><path d="M9 11 L14 15 L12 10Z" fill="#6a6a6a"/><circle cx="4.5" cy="6.8" r="1.2" fill="#fff"/><circle cx="8" cy="6.8" r="1.2" fill="#fff"/><circle cx="11.5" cy="6.8" r="1.2" fill="#fff"/></svg>
<div class="a" style="left:1127px;top:668px;width:1px;height:1px;background:#a0a0a0;"></div>
<div class="a" style="left:1127px;top:665px;width:1px;height:1px;background:#a0a0a0;"></div>
<div class="a" style="left:1127px;top:662px;width:1px;height:1px;background:#a0a0a0;"></div>
<div class="a" style="left:1124px;top:668px;width:1px;height:1px;background:#a0a0a0;"></div>
<div class="a" style="left:1124px;top:665px;width:1px;height:1px;background:#a0a0a0;"></div>
<div class="a" style="left:1121px;top:668px;width:1px;height:1px;background:#a0a0a0;"></div>
<div class="a" style="left:23px;top:78px;width:1px;height:1px;background:#c4c4c4;"></div>
<div class="a" style="left:26px;top:78px;width:1px;height:1px;background:#c4c4c4;"></div>
<div class="a" style="left:23px;top:81px;width:1px;height:1px;background:#c4c4c4;"></div>
<div class="a" style="left:26px;top:81px;width:1px;height:1px;background:#c4c4c4;"></div>
<div class="a" style="left:23px;top:84px;width:1px;height:1px;background:#c4c4c4;"></div>
<div class="a" style="left:26px;top:84px;width:1px;height:1px;background:#c4c4c4;"></div>
<div class="a" style="left:23px;top:87px;width:1px;height:1px;background:#c4c4c4;"></div>
<div class="a" style="left:26px;top:87px;width:1px;height:1px;background:#c4c4c4;"></div>
<div class="a" style="left:23px;top:90px;width:1px;height:1px;background:#c4c4c4;"></div>
<div class="a" style="left:26px;top:90px;width:1px;height:1px;background:#c4c4c4;"></div>
<svg class="a" style="left:37px;top:75px;" width="18" height="23" viewBox="0 0 18 23"><path d="M1.5 1.5 H11.5 L16.5 6.5 V21.5 H1.5Z" fill="#fff" stroke="#6e6e6e" stroke-width="1.2" stroke-linejoin="round"/><path d="M11.5 1.5 V6.5 H16.5" fill="#e8e8e8" stroke="#6e6e6e" stroke-width="1.1"/></svg>
<svg class="a" style="left:67px;top:76px;" width="24" height="20" viewBox="0 0 24 20"><path d="M1 18.5 V2 H6.8 L7.8 3.5 H18.5 V6" fill="#f5d547" stroke="#c9a82e" stroke-width="1"/><path d="M1 18.5 L3 6.5 H22.5 L20.5 18.5Z" fill="#fbd84c" stroke="#c9a82e" stroke-width="1" stroke-linejoin="round"/></svg>
<svg class="a" style="left:101px;top:75px;" width="22" height="22" viewBox="0 0 22 22"><rect x="0.8" y="0.8" width="20.4" height="20.4" rx="2.5" fill="#6c98c8" stroke="#4a77aa" stroke-width="1.2"/><rect x="3" y="1.5" width="15.5" height="8" fill="#ececec"/><path d="M5 3.8 H16.5 M5 5.6 H16.5 M5 7.4 H16.5" stroke="#555" stroke-width="0.8"/><rect x="4" y="13" width="13" height="7" fill="#ececec"/><rect x="5.2" y="14" width="2.4" height="5" fill="#335a8a"/></svg>
<svg class="a" style="left:133px;top:75px;" width="24" height="23" viewBox="0 0 24 23"><path d="M1.5 1.5 H16 L21.5 7 V20.5 H1.5Z" fill="#fff" stroke="#6e6e6e" stroke-width="1.2"/><rect x="4" y="3" width="15" height="15" fill="none" stroke="#b8cdf0" stroke-width="0.8"/><path d="M2.5 2 H11 V6 H6.5 V21.5 H2.5Z" fill="#f5d547" stroke="#d4b030" stroke-width="0.6"/><path d="M3 7h2M3 9h2M3 11h2M3 13h2M3 15h2M3 17h2" stroke="#a08520" stroke-width="0.6"/></svg>
<svg class="a" style="left:146px;top:87px;" width="11" height="11" viewBox="0 0 11 11"><rect x="0" y="0" width="11" height="11" rx="1.8" fill="#c7a00f"/><path d="M1.90 5.50 L9.10 5.50 M3.70 2.38 L7.30 8.62 M7.30 2.38 L3.70 8.62 " stroke="#fff" stroke-width="1.3"/><circle cx="5.5" cy="5.5" r="1.8" fill="#fff"/><circle cx="5.5" cy="5.5" r="0.8" fill="#c7a00f"/></svg>
<svg class="a" style="left:166px;top:75px;" width="24" height="23" viewBox="0 0 24 23"><path d="M1.5 1.5 H16 L21.5 7 V20 H1.5Z" fill="#fff" stroke="#6e6e6e" stroke-width="1.2"/><rect x="3.5" y="3" width="16" height="15" fill="none" stroke="#a9c3ee" stroke-width="1"/><path d="M9 9 L19 20" stroke="#5a5030" stroke-width="4"/><path d="M10 10 L19 20" stroke="#f0d070" stroke-width="2.4"/><path d="M6 6 A4 4 0 1 0 12 11 L10 9 L8 9.5 L7.5 7.5 Z" fill="#d8d8d8" stroke="#666" stroke-width="0.8"/></svg>
<svg class="a" style="left:200px;top:76px;" width="22" height="22" viewBox="0 0 22 22"><circle cx="5.3" cy="4.6" r="4.2" fill="#dd6a35" stroke="#a84a20" stroke-width="0.6"/><path d="M13 8.5 L19.5 2" stroke="#4a74b0" stroke-width="2.4" stroke-linecap="round"/><rect x="1.2" y="11.3" width="8.5" height="8.5" fill="#86b88c" stroke="#4a8a52" stroke-width="0.8"/></svg>
<div class="t" style="left:212.5px;top:86px;font-size:12px;transform:scaleX(0.9740);color:#444;">a</div>
<div class="a" style="left:236px;top:78px;width:1px;height:1px;background:#c4c4c4;"></div>
<div class="a" style="left:239px;top:78px;width:1px;height:1px;background:#c4c4c4;"></div>
<div class="a" style="left:236px;top:81px;width:1px;height:1px;background:#c4c4c4;"></div>
<div class="a" style="left:239px;top:81px;width:1px;height:1px;background:#c4c4c4;"></div>
<div class="a" style="left:236px;top:84px;width:1px;height:1px;background:#c4c4c4;"></div>
<div class="a" style="left:239px;top:84px;width:1px;height:1px;background:#c4c4c4;"></div>
<div class="a" style="left:236px;top:87px;width:1px;height:1px;background:#c4c4c4;"></div>
<div class="a" style="left:239px;top:87px;width:1px;height:1px;background:#c4c4c4;"></div>
<div class="a" style="left:236px;top:90px;width:1px;height:1px;background:#c4c4c4;"></div>
<div class="a" style="left:239px;top:90px;width:1px;height:1px;background:#c4c4c4;"></div>
<div class="a" style="left:244px;top:71px;width:32px;height:31px;background:#dadada;border:1px solid #b4b4b4;border-radius:3px;box-sizing:border-box;"></div>
<svg class="a" style="left:250px;top:74px;" width="22" height="25" viewBox="0 0 22 25"><path d="M6.5 22 C4 19 2 15 1.5 12.5 C1.2 11 3 10.5 4 11.8 L6 14.5 V4.5 C6 3 8.5 3 8.5 4.5 V11 V2.8 C8.5 1.2 11 1.2 11 2.8 V11 V3.5 C11 2 13.5 2 13.5 3.5 V11.5 V5.5 C13.5 4 16 4 16 5.5 V14 C16 18 15 20 13.8 22Z" fill="#fff" stroke="#111" stroke-width="1.2" stroke-linejoin="round"/></svg>
<svg class="a" style="left:281px;top:74px;" width="24" height="24" viewBox="0 0 24 24"><rect x="2" y="2" width="14" height="14" fill="#f8de50" stroke="#c8a428" stroke-width="1"/><path d="M12 0.5 L16 5 H13.5 V9.5 H10.5 V5 H8Z M12 23.5 L16 19 H13.5 V14.5 H10.5 V19 H8Z M0.5 12 L5 8 V10.5 H9.5 V13.5 H5 V16Z M23.5 12 L19 8 V10.5 H14.5 V13.5 H19 V16Z" fill="#5c8fc8" stroke="#3d6da5" stroke-width="0.6"/></svg>
<svg class="a" style="left:310.1px;top:73.0px;" width="30.4" height="30.4" viewBox="0 0 30.4 30.4"><path d="M13.60 14.80 L11.00 17.40" stroke="#111" stroke-width="3.2"/><path d="M10.80 17.60 L5.40 23.00" stroke="#3a3a2a" stroke-width="3.6" stroke-linecap="butt"/><path d="M10.60 17.80 L5.70 22.70" stroke="#f4c936" stroke-width="2.2"/><circle cx="18.20" cy="10.20" r="8.20" fill="#ececec" stroke="#5e5e5e" stroke-width="1.2"/><path d="M18.20 10.20 m-5.3 0 h10.6 M 18.20 10.20 m0 -5.3 v10.6" stroke="#5b8ec6" stroke-width="2.2"/></svg>
<svg class="a" style="left:343.2px;top:73.0px;" width="30.4" height="30.4" viewBox="0 0 30.4 30.4"><path d="M13.60 14.80 L11.00 17.40" stroke="#111" stroke-width="3.2"/><path d="M10.80 17.60 L5.40 23.00" stroke="#3a3a2a" stroke-width="3.6" stroke-linecap="butt"/><path d="M10.60 17.80 L5.70 22.70" stroke="#f4c936" stroke-width="2.2"/><circle cx="18.20" cy="10.20" r="8.20" fill="#ececec" stroke="#5e5e5e" stroke-width="1.2"/><path d="M18.20 10.20 m-5.3 0 h10.6" stroke="#5b8ec6" stroke-width="2.2"/></svg>
<svg class="a" style="left:384px;top:74px;" width="20" height="21" viewBox="0 0 20 21"><path d="M0 0 H8 L5.5 2.5 L9 6 L6 9 L2.5 5.5 L0 8Z" fill="#5c8fc8" stroke="#3d6da5" stroke-width="0.5"/><path d="M20 0 H12 L14.5 2.5 L11 6 L14 9 L17.5 5.5 L20 8Z" fill="#5c8fc8" stroke="#3d6da5" stroke-width="0.5"/><path d="M20 21 H12 L14.5 18.5 L11 15 L14 12 L17.5 15.5 L20 13Z" fill="#5c8fc8" stroke="#3d6da5" stroke-width="0.5"/></svg>
<svg class="a" style="left:376.4px;top:74.4px;" width="29.2" height="29.2" viewBox="0 0 29.2 29.2"><path d="M13.43 13.77 L10.83 16.37" stroke="#111" stroke-width="3.2"/><path d="M10.63 16.57 L5.23 21.97" stroke="#3a3a2a" stroke-width="3.6" stroke-linecap="butt"/><path d="M10.43 16.77 L5.53 21.67" stroke="#f4c936" stroke-width="2.2"/><circle cx="17.60" cy="9.60" r="7.60" fill="#ececec" stroke="#5e5e5e" stroke-width="1.2"/></svg>
<svg class="a" style="left:414px;top:76px;" width="11" height="15" viewBox="0 0 11 15"><rect x="0.5" y="0.5" width="10" height="14" fill="#f8de50" stroke="#c8a428"/></svg>
<svg class="a" style="left:409.9px;top:72.2px;" width="30.8" height="30.8" viewBox="0 0 30.8 30.8"><path d="M13.66 15.14 L11.06 17.74" stroke="#111" stroke-width="3.2"/><path d="M10.86 17.94 L5.46 23.34" stroke="#3a3a2a" stroke-width="3.6" stroke-linecap="butt"/><path d="M10.66 18.14 L5.76 23.04" stroke="#f4c936" stroke-width="2.2"/><circle cx="18.40" cy="10.40" r="8.40" fill="#ececec" stroke="#5e5e5e" stroke-width="1.2"/><path d="M18.40 10.40 m0 -8 a8 8 0 0 0 0 16Z" fill="#e8e0c0" opacity="0.8"/><path d="M18.40 10.40 m0 -8 v16" stroke="#ccc" stroke-width="0.6"/></svg>
<svg class="a" style="left:447px;top:76px;" width="11" height="15" viewBox="0 0 11 15"><rect x="0.5" y="0.5" width="10" height="14" fill="#f4f4f4" stroke="#888"/></svg>
<svg class="a" style="left:443.0px;top:72.2px;" width="30.8" height="30.8" viewBox="0 0 30.8 30.8"><path d="M13.66 15.14 L11.06 17.74" stroke="#111" stroke-width="3.2"/><path d="M10.86 17.94 L5.46 23.34" stroke="#3a3a2a" stroke-width="3.6" stroke-linecap="butt"/><path d="M10.66 18.14 L5.76 23.04" stroke="#f4c936" stroke-width="2.2"/><circle cx="18.40" cy="10.40" r="8.40" fill="#ececec" stroke="#5e5e5e" stroke-width="1.2"/><path d="M18.40 10.40 m0 -8 v16" stroke="#ccc" stroke-width="0.8"/></svg>
<svg class="a" style="left:481px;top:76px;" width="10" height="14" viewBox="0 0 10 14"><rect x="0.5" y="0.5" width="9" height="13" fill="#f4f4f4" stroke="#ccc"/></svg>
<svg class="a" style="left:475.7px;top:73px;opacity:0.35;" width="30" height="30" viewBox="0 0 30 30"><path d="M13.54 14.46 L10.94 17.06" stroke="#111" stroke-width="3.2"/><path d="M10.74 17.26 L5.34 22.66" stroke="#3a3a2a" stroke-width="3.6" stroke-linecap="butt"/><path d="M10.54 17.46 L5.64 22.36" stroke="#f4c936" stroke-width="2.2"/><circle cx="18.00" cy="10.00" r="8.00" fill="#ececec" stroke="#5e5e5e" stroke-width="1.2"/><text x="18.00" y="10.00" dy="4" font-size="9" font-weight="bold" text-anchor="middle" fill="#555" font-family="Liberation Sans">1:1</text></svg>
<svg class="a" style="left:508.3px;top:73px;" width="30" height="30" viewBox="0 0 30 30"><path d="M13.54 14.46 L10.94 17.06" stroke="#111" stroke-width="3.2"/><path d="M10.74 17.26 L5.34 22.66" stroke="#3a3a2a" stroke-width="3.6" stroke-linecap="butt"/><path d="M10.54 17.46 L5.64 22.36" stroke="#f4c936" stroke-width="2.2"/><circle cx="18.00" cy="10.00" r="8.00" fill="#ececec" stroke="#5e5e5e" stroke-width="1.2"/></svg>
<svg class="a" style="left:525px;top:87px;" width="11" height="11" viewBox="0 0 11 11"><rect x="0" y="0" width="11" height="11" fill="#5c8fc8" stroke="#3d6da5" stroke-width="0.6"/><path d="M8 2 L3.5 5.5 L8 9" fill="none" stroke="#fff" stroke-width="1.8"/></svg>
<svg class="a" style="left:541.4px;top:73px;opacity:0.35;" width="30" height="30" viewBox="0 0 30 30"><path d="M13.54 14.46 L10.94 17.06" stroke="#111" stroke-width="3.2"/><path d="M10.74 17.26 L5.34 22.66" stroke="#3a3a2a" stroke-width="3.6" stroke-linecap="butt"/><path d="M10.54 17.46 L5.64 22.36" stroke="#f4c936" stroke-width="2.2"/><circle cx="18.00" cy="10.00" r="8.00" fill="#ececec" stroke="#5e5e5e" stroke-width="1.2"/></svg>
<svg class="a" style="left:558px;top:87px;opacity:0.8;" width="11" height="11" viewBox="0 0 11 11"><rect x="0" y="0" width="11" height="11" fill="#d8d8d8"/><path d="M3 2 L7.5 5.5 L3 9" fill="none" stroke="#fff" stroke-width="1.8"/></svg>
<svg class="a" style="left:579px;top:75px;" width="22" height="21" viewBox="0 0 22 21"><path d="M4 1 H20.5 V20 H4 C2 20 1 19 1 17.5 V2.5 C1 1.5 2 1 3 1Z" fill="url(#gpg)" stroke="#8a8a8a" stroke-width="1"/><path d="M1 17.5 C1 16 2 15.5 4 15.5 V1" fill="#f4f4f4" stroke="#8a8a8a" stroke-width="1"/><defs><linearGradient id="gpg"><stop offset="0" stop-color="#c8c8c8"/><stop offset="1" stop-color="#f0f0f0"/></linearGradient></defs></svg>
<svg class="a" style="left:591px;top:87px;" width="11" height="11" viewBox="0 0 11 11"><rect x="0" y="0" width="11" height="11" rx="1.8" fill="#c7a00f"/><path d="M1.90 5.50 L9.10 5.50 M3.70 2.38 L7.30 8.62 M7.30 2.38 L3.70 8.62 " stroke="#fff" stroke-width="1.3"/><circle cx="5.5" cy="5.5" r="1.8" fill="#fff"/><circle cx="5.5" cy="5.5" r="0.8" fill="#c7a00f"/></svg>
<svg class="a" style="left:611px;top:78px;" width="22" height="15" viewBox="0 0 22 15"><path d="M1 13 L6 2 L21 1 L22 14 Z" fill="#e2e2e2" stroke="#9a9a9a" stroke-width="0.9"/><path d="M5 5 L21 4.5 M3.5 8.5 L21.5 8 M10 1.5 L8 13.5 M15.5 1.2 L15 14" stroke="#a8a8a8" stroke-width="0.6"/></svg>
<svg class="a" style="left:624px;top:87px;" width="11" height="11" viewBox="0 0 11 11"><rect x="0" y="0" width="11" height="11" rx="1.8" fill="#c7a00f"/><path d="M1.90 5.50 L9.10 5.50 M3.70 2.38 L7.30 8.62 M7.30 2.38 L3.70 8.62 " stroke="#fff" stroke-width="1.3"/><circle cx="5.5" cy="5.5" r="1.8" fill="#fff"/><circle cx="5.5" cy="5.5" r="0.8" fill="#c7a00f"/></svg>
<svg class="a" style="left:650px;top:75px;" width="13" height="22" viewBox="0 0 13 22"><path d="M1 1 H11 V20 L5 14.5 V21 L1 17Z" fill="#6c98c8" stroke="#3d5f8a" stroke-width="1.1"/></svg>
<svg class="a" style="left:657px;top:87px;" width="11" height="11" viewBox="0 0 11 11"><rect x="0" y="0" width="11" height="11" rx="1.8" fill="#c7a00f"/><path d="M1.90 5.50 L9.10 5.50 M3.70 2.38 L7.30 8.62 M7.30 2.38 L3.70 8.62 " stroke="#fff" stroke-width="1.3"/><circle cx="5.5" cy="5.5" r="1.8" fill="#fff"/><circle cx="5.5" cy="5.5" r="0.8" fill="#c7a00f"/></svg>
<svg class="a" style="left:679px;top:75px;" width="21" height="21" viewBox="0 0 21 21"><path d="M4 1 H20 V20 H4 C2 20 1 19 1 17.5 V2.5 C1 1.5 2 1 3 1Z" fill="url(#gpg)" stroke="#8a8a8a" stroke-width="1"/><path d="M1 17.5 C1 16 2 15.5 4 15.5 V1" fill="#f4f4f4" stroke="#8a8a8a" stroke-width="1"/><path d="M10.5 0.5 H15 V9 L12.7 11 L10.5 9Z" fill="#6c98c8" stroke="#3d5f8a" stroke-width="0.8"/></svg>
<svg class="a" style="left:711px;top:74px;" width="23" height="23" viewBox="0 0 23 23"><circle cx="11.1" cy="11.5" r="10.4" fill="#f0f0f0" stroke="#555" stroke-width="1.1"/><path d="M11.1 5 V11.5 L15.5 15" fill="none" stroke="#777" stroke-width="1.3"/><circle cx="19.60" cy="11.50" r="0.7" fill="#5b8ec6"/><circle cx="18.46" cy="15.75" r="0.7" fill="#5b8ec6"/><circle cx="15.35" cy="18.86" r="0.7" fill="#5b8ec6"/><circle cx="11.10" cy="20.00" r="0.7" fill="#5b8ec6"/><circle cx="6.85" cy="18.86" r="0.7" fill="#5b8ec6"/><circle cx="3.74" cy="15.75" r="0.7" fill="#5b8ec6"/><circle cx="2.60" cy="11.50" r="0.7" fill="#5b8ec6"/><circle cx="3.74" cy="7.25" r="0.7" fill="#5b8ec6"/><circle cx="6.85" cy="4.14" r="0.7" fill="#5b8ec6"/><circle cx="11.10" cy="3.00" r="0.7" fill="#5b8ec6"/><circle cx="15.35" cy="4.14" r="0.7" fill="#5b8ec6"/><circle cx="18.46" cy="7.25" r="0.7" fill="#5b8ec6"/></svg>
<svg class="a" style="left:744px;top:75px;" width="22" height="23" viewBox="0 0 22 23"><path d="M2 10 C2.5 4 8 1 13 2.5 C15 3 16.5 4 17.5 5 L20.5 2 V11 H11.5 L14.5 8 C12 5.5 7.5 6 6 10Z" fill="#4a86c8"/><path d="M20 13 C19.5 19 14 22 9 20.5 C7 20 5.5 19 4.5 18 L1.5 21 V12 H10.5 L7.5 15 C10 17.5 14.5 17 16 13Z" fill="#4a86c8"/></svg>
<div class="a" style="left:781px;top:78px;width:1px;height:1px;background:#c4c4c4;"></div>
<div class="a" style="left:784px;top:78px;width:1px;height:1px;background:#c4c4c4;"></div>
<div class="a" style="left:781px;top:81px;width:1px;height:1px;background:#c4c4c4;"></div>
<div class="a" style="left:784px;top:81px;width:1px;height:1px;background:#c4c4c4;"></div>
<div class="a" style="left:781px;top:84px;width:1px;height:1px;background:#c4c4c4;"></div>
<div class="a" style="left:784px;top:84px;width:1px;height:1px;background:#c4c4c4;"></div>
<div class="a" style="left:781px;top:87px;width:1px;height:1px;background:#c4c4c4;"></div>
<div class="a" style="left:784px;top:87px;width:1px;height:1px;background:#c4c4c4;"></div>
<div class="a" style="left:781px;top:90px;width:1px;height:1px;background:#c4c4c4;"></div>
<div class="a" style="left:784px;top:90px;width:1px;height:1px;background:#c4c4c4;"></div>
<svg class="a" style="left:791px;top:74px;" width="26" height="25" viewBox="0 0 26 25"><circle cx="9.3" cy="8.6" r="8.4" fill="#6d98c8" stroke="#5580b0" stroke-width="0.6"/><circle cx="10.5" cy="3.8" r="1.3" fill="#fff"/><path d="M9 6.5 L7 14 H9.5" fill="none" stroke="#fff" stroke-width="2"/><path d="M12.7 10.8 L14.2 23 L16.9 20.2 L19.8 24.2 L21.6 22.8 L18.9 18.9 L22.8 18.2Z" fill="#fff" stroke="#333" stroke-width="0.9" stroke-linejoin="round"/></svg>
<svg class="a" style="left:827px;top:76px;" width="20" height="20" viewBox="0 0 20 20"><rect x="0.6" y="0.6" width="18.8" height="18.8" fill="#eeebe6" stroke="#5b8ec6" stroke-width="1.1"/><rect x="1.1" y="1.1" width="17.8" height="4.2" fill="#c6ddf2"/><path d="M1 5.5 H19" stroke="#5b8ec6" stroke-width="0.8"/><path d="M3.5 3.2 H6.5 M8.5 3.2 H16.5" stroke="#5b8ec6" stroke-width="1.5"/><path d="M3.5 8 H6.5 M8.5 8 H16.5 M3.5 11 H6.5 M8.5 11 H16.5 M3.5 14 H6.5 M8.5 14 H16.5 M3.5 17 H6.5 M8.5 17 H16.5" stroke="#5b8ec6" stroke-width="1.1"/></svg>
<svg class="a" style="left:859px;top:75px;" width="23" height="23" viewBox="0 0 23 23"><path d="M1 1 V21 M22 1 V21" stroke="#444" stroke-width="1"/><rect x="0" y="20" width="23" height="2.2" fill="#666"/><path d="M1 3.6 H22 M1 9 H22 M1 15.3 H22" stroke="#555" stroke-width="0.8"/><path d="M9 1.2000000000000002 L11.4 3.6 L9 6.0 L6.6 3.6Z" fill="#e88" stroke="#c33" stroke-width="0.6"/><path d="M16.5 1.2000000000000002 L18.9 3.6 L16.5 6.0 L14.1 3.6Z" fill="#e88" stroke="#c33" stroke-width="0.6"/><path d="M7 6.6 L9.4 9 L7 11.4 L4.6 9Z" fill="#9d9" stroke="#4a4" stroke-width="0.6"/><path d="M11.5 6.6 L13.9 9 L11.5 11.4 L9.1 9Z" fill="#9d9" stroke="#4a4" stroke-width="0.6"/><path d="M7 12.9 L9.4 15.3 L7 17.7 L4.6 15.3Z" fill="#9bd" stroke="#48a" stroke-width="0.6"/><path d="M11.5 12.9 L13.9 15.3 L11.5 17.7 L9.1 15.3Z" fill="#9bd" stroke="#48a" stroke-width="0.6"/><path d="M16.5 12.9 L18.9 15.3 L16.5 17.7 L14.1 15.3Z" fill="#9bd" stroke="#48a" stroke-width="0.6"/></svg>
<div class="a" style="left:887px;top:71px;width:32px;height:31px;background:#dadada;border:1px solid #b4b4b4;border-radius:3px;box-sizing:border-box;"></div>
<svg class="a" style="left:891px;top:74px;" width="24" height="24" viewBox="0 0 24 24"><polygon points="12.00,1.00 14.60,5.72 19.78,4.22 18.28,9.40 23.00,12.00 18.28,14.60 19.78,19.78 14.60,18.28 12.00,23.00 9.40,18.28 4.22,19.78 5.72,14.60 1.00,12.00 5.72,9.40 4.22,4.22 9.40,5.72" fill="#a9c6ea" stroke="#4f86cc" stroke-width="1" stroke-linejoin="round"/><circle cx="12" cy="12" r="2.6" fill="#f0f0f0" stroke="#4f86cc" stroke-width="0.9"/></svg>
<svg class="a" style="left:928px;top:76px;" width="16" height="20" viewBox="0 0 16 20"><path d="M0.5 0.5 H15 L15.5 5 H14 L12.5 3 H5 L10.5 10 L4.5 17 H13 L14.5 14.5 H16 L15 19.5 H0.5 L7.5 10.5Z" fill="#990099"/></svg>
<svg class="a" style="left:958px;top:79px;" width="23" height="17" viewBox="0 0 23 17"><path d="M1 2.5 H22 M1 0.5 V4.5 M22 0.5 V4.5" stroke="#2a4a6e" stroke-width="1.5"/><rect x="0.8" y="7.5" width="21.4" height="8" fill="#d0d0d0" stroke="#555" stroke-width="1"/><path d="M4 7.5 V10.5 M7 7.5 V10 M10 7.5 V10.5 M13 7.5 V12.5 M16 7.5 V10.5 M19 7.5 V10" stroke="#555" stroke-width="0.8"/></svg>
<svg class="a" style="left:987px;top:84px;" width="8" height="5" viewBox="0 0 8 5"><path d="M0 0 H8 L4 4.5Z" fill="#555"/></svg>
<svg class="a" style="left:1003px;top:75px;" width="23" height="21" viewBox="0 0 23 21"><path d="M3 0.8 H20 C21.5 0.8 22.3 1.6 22.3 3 V10 C22.3 11.4 21.5 12.2 20 12.2 H10 L6 17 V12.2 H3 C1.5 12.2 0.8 11.4 0.8 10 V3 C0.8 1.6 1.5 0.8 3 0.8Z" fill="#fbe88a" stroke="#d0ac20" stroke-width="1"/><circle cx="5" cy="17" r="3.3" fill="#6aa678" stroke="#3a5a3a" stroke-width="0.9"/></svg>
<svg class="a" style="left:1035px;top:74px;" width="24" height="24" viewBox="0 0 24 24"><polygon points="10.00,0.50 12.32,2.87 15.58,2.31 16.07,5.59 19.04,7.06 17.50,10.00 19.04,12.94 16.07,14.41 15.58,17.69 12.32,17.13 10.00,19.50 7.68,17.13 4.42,17.69 3.93,14.41 0.96,12.94 2.50,10.00 0.96,7.06 3.93,5.59 4.42,2.31 7.68,2.87" fill="#e6e6e6" stroke="#c8c8c8" stroke-width="1" stroke-linejoin="round"/><circle cx="10" cy="10" r="5" fill="#cfcfcf" stroke="#b8b8b8"/><path d="M8.5 7.5 L13 10 L8.5 12.5Z" fill="#f4f4f4"/><path d="M13 12 V22 L15.5 19.5 L17.5 23.5 L19 22.8 L17 18.8 H20.5Z" fill="#f4f4f4" stroke="#c0c0c0" stroke-width="0.9"/></svg>
<svg class="a" style="left:1065px;top:84px;" width="8" height="5" viewBox="0 0 8 5"><path d="M0 0 H8 L4 4.5Z" fill="#aaa"/></svg>
<svg class="a" style="left:1080px;top:75px;" width="24" height="23" viewBox="0 0 24 23"><path d="M1 1 H22.5 V16 H9 L1.5 21.5 L4.5 16 H1Z" fill="#e8f0f6" stroke="#6a6a6a" stroke-width="1"/><path d="M5.5 3.5 H17.5 V6.5 H16.5 L16 5 H12.5 V13 H14 V14 H9 V13 H10.5 V5 H7 L6.5 6.5 H5.5Z" fill="#333"/></svg>
<svg class="a" style="left:1110px;top:84px;" width="8" height="5" viewBox="0 0 8 5"><path d="M0 0 H8 L4 4.5Z" fill="#555"/></svg>
<div class="a" style="left:23px;top:117px;width:1px;height:1px;background:#c4c4c4;"></div>
<div class="a" style="left:26px;top:117px;width:1px;height:1px;background:#c4c4c4;"></div>
<div class="a" style="left:23px;top:120px;width:1px;height:1px;background:#c4c4c4;"></div>
<div class="a" style="left:26px;top:120px;width:1px;height:1px;background:#c4c4c4;"></div>
<div class="a" style="left:23px;top:123px;width:1px;height:1px;background:#c4c4c4;"></div>
<div class="a" style="left:26px;top:123px;width:1px;height:1px;background:#c4c4c4;"></div>
<div class="a" style="left:23px;top:126px;width:1px;height:1px;background:#c4c4c4;"></div>
<div class="a" style="left:26px;top:126px;width:1px;height:1px;background:#c4c4c4;"></div>
<div class="a" style="left:23px;top:129px;width:1px;height:1px;background:#c4c4c4;"></div>
<div class="a" style="left:26px;top:129px;width:1px;height:1px;background:#c4c4c4;"></div>
<svg class="a" style="left:33px;top:112px;" width="26" height="26" viewBox="0 0 26 26"><path d="M1 10.5 L12 7 L16.5 21 L5.5 24.5Z" fill="#e06a30" stroke="#b04a20" stroke-width="0.6"/><path d="M4 6 L15 4.5 L17 19.5 L6 21Z" fill="#f5cc20" stroke="#c9a010" stroke-width="0.6"/><path d="M10 1.5 L24.8 5 L21.5 19 L7 15.5Z" fill="#6c98c8" stroke="#3f6a9e" stroke-width="0.9"/></svg>
<svg class="a" style="left:49px;top:128px;" width="10" height="9" viewBox="0 0 10 9"><rect x="0" y="0" width="9.5" height="9" rx="1.8" fill="#4e9a5a"/><path d="M4.75 1.5 V7.5 M1.75 4.5 H7.75" stroke="#fff" stroke-width="1.8"/></svg>
<svg class="a" style="left:66px;top:112px;" width="26" height="26" viewBox="0 0 26 26"><path d="M1 8.2 L13 3 L24.5 8.5 L13.2 14.8Z" fill="#8a7010" stroke="#333" stroke-width="0.8"/><circle cx="13" cy="7.6" r="7.6" fill="#9dbde2" stroke="#6a90c0" stroke-width="0.6"/><path d="M7.5 4 C9.5 3 11 5 10 7.5 C9 10 7 10.5 6.5 8 C6 6 6.5 4.5 7.5 4Z M13.5 2.5 C16.5 2 18.5 4 17.5 6.5 C16.5 8.5 14 8 13.5 6 Z M12 10 C14.5 9 17.5 10 17 12.5 C15 14 12.5 13.5 12 10Z" fill="#2e5a8a"/><path d="M1 8.2 L13.2 14.8 V24.5 L1.5 18Z" fill="#e0b000" stroke="#333" stroke-width="0.8" stroke-linejoin="round"/><path d="M13.2 14.8 L24.5 8.5 V18 L13.2 24.5Z" fill="#fff27a" stroke="#333" stroke-width="0.8" stroke-linejoin="round"/></svg>
<svg class="a" style="left:82px;top:128px;" width="9.5" height="9.5" viewBox="0 0 9.5 9.5"><rect x="0" y="0" width="9.5" height="9.5" rx="1.8" fill="#c7a00f"/><path d="M1.55 4.75 L7.95 4.75 M2.49 2.49 L7.01 7.01 M4.75 1.55 L4.75 7.95 M7.01 2.49 L2.49 7.01 " stroke="#fff" stroke-width="1.2" stroke-linecap="round"/></svg>
<svg class="a" style="left:99px;top:112px;" width="25" height="22" viewBox="0 0 25 22"><path d="M2.5 3.5 L10 19 L17 3.5 H22.5" fill="none" stroke="#2a3a50" stroke-width="1.3"/><circle cx="2.5" cy="3.5" r="1.8" fill="#fff" stroke="#2a3a50" stroke-width="0.8"/><circle cx="10" cy="19" r="1.8" fill="#fff" stroke="#2a3a50" stroke-width="0.8"/><circle cx="17" cy="3.5" r="1.8" fill="#fff" stroke="#2a3a50" stroke-width="0.8"/><circle cx="22.5" cy="3.5" r="1.8" fill="#fff" stroke="#2a3a50" stroke-width="0.8"/></svg>
<svg class="a" style="left:115px;top:128px;" width="9.5" height="9.5" viewBox="0 0 9.5 9.5"><rect x="0" y="0" width="9.5" height="9.5" rx="1.8" fill="#c7a00f"/><path d="M1.55 4.75 L7.95 4.75 M2.49 2.49 L7.01 7.01 M4.75 1.55 L4.75 7.95 M7.01 2.49 L2.49 7.01 " stroke="#fff" stroke-width="1.2" stroke-linecap="round"/></svg>
<svg class="a" style="left:132px;top:112px;" width="25" height="26" viewBox="0 0 25 26"><path d="M1.5 24.5 C3 17 7 9 13 5 C17 2.5 21 1.5 23.5 1 C23.5 4 22 9 18 13 C13 18 7 20 3 22Z" fill="#86a8d0" stroke="#3d5f8a" stroke-width="0.9"/><path d="M2 24 C8 16 14 9 22 2" stroke="#e8f0f8" stroke-width="0.8" fill="none"/></svg>
<svg class="a" style="left:148px;top:128px;" width="9.5" height="9.5" viewBox="0 0 9.5 9.5"><rect x="0" y="0" width="9.5" height="9.5" rx="1.8" fill="#c7a00f"/><path d="M1.55 4.75 L7.95 4.75 M2.49 2.49 L7.01 7.01 M4.75 1.55 L4.75 7.95 M7.01 2.49 L2.49 7.01 " stroke="#fff" stroke-width="1.2" stroke-linecap="round"/></svg>
<svg class="a" style="left:168px;top:114px;" width="22" height="20" viewBox="0 0 22 20"><path d="M5 1 V5 M8 1 V5 M11 1 V5 M14 1 V5 M17 1 V5 M5 16 V20 M8 16 V20 M11 16 V20 M14 16 V20" stroke="#2a3a50" stroke-width="1.2"/><rect x="1" y="5" width="19.5" height="11" rx="1.5" fill="#6c98c8" stroke="#3f6a9e" stroke-width="0.9"/></svg>
<svg class="a" style="left:181px;top:128px;" width="9.5" height="9.5" viewBox="0 0 9.5 9.5"><rect x="0" y="0" width="9.5" height="9.5" rx="1.8" fill="#c7a00f"/><path d="M1.55 4.75 L7.95 4.75 M2.49 2.49 L7.01 7.01 M4.75 1.55 L4.75 7.95 M7.01 2.49 L2.49 7.01 " stroke="#fff" stroke-width="1.2" stroke-linecap="round"/></svg>
<div class="a" style="left:198px;top:116px;width:1px;height:18px;background:#d8d8d8;"></div>
<div class="a" style="left:199px;top:116px;width:1px;height:18px;background:#fff;"></div>
<svg class="a" style="left:206px;top:113px;" width="24" height="24" viewBox="0 0 24 24"><rect x="0.8" y="0.8" width="21.4" height="21.4" rx="2.2" fill="url(#gdg)" stroke="#5a7fa8" stroke-width="1"/><defs><linearGradient id="gdg" x1="0" y1="0" x2="1" y2="1"><stop offset="0" stop-color="#dde8f4"/><stop offset="1" stop-color="#a8c0dc"/></linearGradient></defs><path d="M1.8 1.8 L7.5 17.5 L15 1.8 L21.2 1.8" fill="none" stroke="#2a3a50" stroke-width="1.1"/><circle cx="1.8" cy="1.8" r="1.3" fill="#fff" stroke="#2a3a50" stroke-width="0.6"/><circle cx="7.5" cy="17.5" r="1.6" fill="#fff" stroke="#2a3a50" stroke-width="0.7"/><circle cx="15" cy="1.8" r="1.3" fill="#fff" stroke="#2a3a50" stroke-width="0.6"/></svg>
<svg class="a" style="left:221px;top:128px;" width="9.5" height="9.5" viewBox="0 0 9.5 9.5"><rect x="0" y="0" width="9.5" height="9.5" rx="1.8" fill="#c7a00f"/><path d="M1.55 4.75 L7.95 4.75 M2.49 2.49 L7.01 7.01 M4.75 1.55 L4.75 7.95 M7.01 2.49 L2.49 7.01 " stroke="#fff" stroke-width="1.2" stroke-linecap="round"/></svg>
<div class="a" style="left:238px;top:116px;width:1px;height:18px;background:#d8d8d8;"></div>
<div class="a" style="left:239px;top:116px;width:1px;height:18px;background:#fff;"></div>
<div class="a" style="left:250px;top:117px;width:1px;height:1px;background:#c4c4c4;"></div>
<div class="a" style="left:253px;top:117px;width:1px;height:1px;background:#c4c4c4;"></div>
<div class="a" style="left:250px;top:120px;width:1px;height:1px;background:#c4c4c4;"></div>
<div class="a" style="left:253px;top:120px;width:1px;height:1px;background:#c4c4c4;"></div>
<div class="a" style="left:250px;top:123px;width:1px;height:1px;background:#c4c4c4;"></div>
<div class="a" style="left:253px;top:123px;width:1px;height:1px;background:#c4c4c4;"></div>
<div class="a" style="left:250px;top:126px;width:1px;height:1px;background:#c4c4c4;"></div>
<div class="a" style="left:253px;top:126px;width:1px;height:1px;background:#c4c4c4;"></div>
<div class="a" style="left:250px;top:129px;width:1px;height:1px;background:#c4c4c4;"></div>
<div class="a" style="left:253px;top:129px;width:1px;height:1px;background:#c4c4c4;"></div>
<div class="a" style="left:250px;top:132px;width:1px;height:1px;background:#c4c4c4;"></div>
<div class="a" style="left:253px;top:132px;width:1px;height:1px;background:#c4c4c4;"></div>
<svg class="a" style="left:263px;top:114px;" width="23" height="24" viewBox="0 0 23 24"><rect x="0.5" y="0.5" width="21" height="19" fill="#e0e0e0" stroke="#222" stroke-width="0.9" stroke-dasharray="1.8 1.2"/><rect x="1.5" y="1.5" width="13.3" height="13" fill="#fbe24a" stroke="#c9a010" stroke-width="0.9"/><path d="M9 7.5 V20.5 L12.2 17.6 L14.8 22.6 L17.2 21.4 L14.7 16.5 H19.5Z" fill="#fff" stroke="#333" stroke-width="0.8" stroke-linejoin="round"/></svg>
<svg class="a" style="left:292px;top:123px;" width="8" height="5" viewBox="0 0 8 5"><path d="M0 0 H8 L4 4.5Z" fill="#555"/></svg>
<svg class="a" style="left:315px;top:121px;" width="14" height="14" viewBox="0 0 14 14"><rect x="0.5" y="0.5" width="13.3" height="13.3" fill="#fbe24a" stroke="#c9a010" stroke-width="0.9"/></svg>
<svg class="a" style="left:309.5px;top:114.5px;" width="12.0" height="15.0" viewBox="0 0 12.0 15.0"><g transform="scale(1.0)"><path d="M9.3 2.6 C8.6 0.8 6.8 0.4 5.2 0.6 C2.8 0.9 1.4 2.5 1.6 4.3 C1.8 6 3.5 6.9 5.5 6.9 C2.6 6.9 0.6 8.3 0.7 10.6 C0.8 12.8 3 14 5.5 13.9 C7.8 13.8 9.4 12.6 10.2 11" fill="none" stroke="#4e2a6e" stroke-width="1.9" stroke-linecap="round"/><circle cx="9.2" cy="2.4" r="1.4" fill="#4e2a6e"/><circle cx="10" cy="11.3" r="1.2" fill="#4e2a6e"/><path d="M4.5 6.9 H7.5" stroke="#4e2a6e" stroke-width="1.2"/></g></svg>
<svg class="a" style="left:337px;top:123px;" width="8" height="5" viewBox="0 0 8 5"><path d="M0 0 H8 L4 4.5Z" fill="#555"/></svg>
<svg class="a" style="left:354px;top:115px;" width="23" height="23" viewBox="0 0 23 23"><rect x="0.5" y="0.5" width="13" height="13" fill="#fbe24a" stroke="#c9a010" stroke-width="0.9"/><rect x="4.3" y="4.3" width="13.4" height="13.4" fill="#fbe24a" stroke="#c9a010" stroke-width="0.9"/><rect x="11" y="11" width="11" height="11" rx="1.8" fill="#d41a1a"/><circle cx="16.5" cy="16.5" r="3.6" fill="#f08080" stroke="#fff" stroke-width="0.9"/><path d="M14 19 L19 14" stroke="#fff" stroke-width="1.2"/></svg>
<svg class="a" style="left:382px;top:123px;" width="8" height="5" viewBox="0 0 8 5"><path d="M0 0 H8 L4 4.5Z" fill="#555"/></svg>
<svg class="a" style="left:399px;top:115px;" width="22" height="22" viewBox="0 0 22 22"><rect x="0.5" y="0.5" width="13.5" height="13.2" fill="#fbe24a" stroke="#c9a010" stroke-width="0.9"/><path d="M17.5 20.5 L14.5 15 A3.5 3.5 0 1 1 20.5 15Z" fill="#6a8aa6"/><circle cx="17.5" cy="12.8" r="1.3" fill="#fff"/></svg>
<svg class="a" style="left:26px;top:172px;" width="15" height="15" viewBox="0 0 15 15"><rect x="0.6" y="0.6" width="11.5" height="11" fill="#f0f0f0" stroke="#777" stroke-width="1.1"/><rect x="8" y="8.8" width="6.2" height="6" rx="1.2" fill="#4e9a5a"/><circle cx="11.1" cy="11.8" r="1.6" fill="#c8e0c8"/></svg>
<svg class="a" style="left:51px;top:172px;" width="14.5" height="14.5" viewBox="0 0 14.5 14.5"><g transform="scale(0.659)"><path d="M2 10 C2.5 4 8 1 13 2.5 C15 3 16.5 4 17.5 5 L20.5 2 V11 H11.5 L14.5 8 C12 5.5 7.5 6 6 10Z" fill="#4a86c8"/><path d="M20 13 C19.5 19 14 22 9 20.5 C7 20 5.5 19 4.5 18 L1.5 21 V12 H10.5 L7.5 15 C10 17.5 14.5 17 16 13Z" fill="#4a86c8"/></g></svg>
<svg class="a" style="left:76px;top:171px;" width="14.5" height="15.5" viewBox="0 0 14.5 15.5"><path d="M0.6 1 H13.9 L8.99 8.06 V14.9 L6.09 13.3 V8.06Z" fill="#6c98c8" stroke="#4a77aa" stroke-width="0.8" stroke-linejoin="round"/><rect x="1" y="1.1" width="12.5" height="2.3" fill="#f2dc30"/></svg>
<svg class="a" style="left:101px;top:171px;" width="16" height="16" viewBox="0 0 16 16"><path d="M0.5 1 H12 M1.5 1 V14.5" stroke="#999" stroke-width="0.9"/><path d="M1.5 6 H4 M1.5 13 H4" stroke="#999" stroke-width="0.8"/><rect x="4" y="4.5" width="3" height="3" fill="#f7a21a"/><rect x="4" y="11.2" width="3" height="3" fill="#f7a21a"/><path d="M10.5 14.5 V6.5 H7 L11.5 1 L16 6.5 H12.5 V14.5Z" fill="#6c98c8" stroke="#2a4a6e" stroke-width="0.9" stroke-linejoin="round"/></svg>
<svg class="a" style="left:126px;top:171.5px;" width="15" height="15" viewBox="0 0 15 15"><circle cx="7.2" cy="7.2" r="6.9" fill="#6d98c8" stroke="#5580b0" stroke-width="0.5"/><circle cx="8.2" cy="3.5" r="1.1" fill="#fff"/><path d="M7.3 5.8 L5.8 11.5 H7.8" fill="none" stroke="#fff" stroke-width="1.7"/></svg>
<svg class="a" style="left:26px;top:393px;" width="16" height="14" viewBox="0 0 16 14"><path d="M0.5 7 L4 4 L8 7 L5 11Z" fill="#e8d040"/><path d="M0.5 8.5 L3 6 L7 9 L5 12Z" fill="#6c98c8"/><path d="M0.5 10 L2.5 8 L6 11 L4.5 13Z" fill="#e04040"/><path d="M4.5 8 L8.5 5 L11 8.5 L7 12Z" fill="#d8a860" stroke="#a07030" stroke-width="0.5"/><path d="M9.5 6 L15 0.8" stroke="#d08a30" stroke-width="1.8"/></svg>
<svg class="a" style="left:50px;top:392px;" width="16" height="16" viewBox="0 0 16 16"><path d="M1.5 8 V14.5 H8 M3.5 6 V12.5 H10" fill="none" stroke="#777" stroke-width="1"/><rect x="5.5" y="3.5" width="8" height="9" fill="#f0f0f0" stroke="#777" stroke-width="1"/><path d="M8 10 V2.5 C8 0.5 11 0.5 11 2.5 V9" fill="none" stroke="#3f6a9e" stroke-width="1"/><rect x="9.5" y="10" width="6" height="6" rx="1.2" fill="#4e9a5a"/><circle cx="12.5" cy="13" r="1.6" fill="#c8e0c8"/></svg>
<svg class="a" style="left:75px;top:394px;" width="19" height="15" viewBox="0 0 19 15"><path d="M1 6 C4 1 12 1 16 6 C12 11 4 11 1 6Z" fill="#fff" stroke="#aaa" stroke-width="1"/><circle cx="8.5" cy="6" r="3.6" fill="#6c98c8" stroke="#3f6a9e" stroke-width="0.5"/><circle cx="8.5" cy="5.5" r="1.3" fill="#111"/><path d="M12.5 11 H18 L15.25 14Z" fill="#444"/></svg>
<svg class="a" style="left:101px;top:392px;" width="14.5" height="16" viewBox="0 0 14.5 16"><path d="M0.6 1 H13.9 L8.99 8.32 V15.4 L6.09 13.8 V8.32Z" fill="#6c98c8" stroke="#4a77aa" stroke-width="0.8" stroke-linejoin="round"/><rect x="1" y="1.1" width="12.5" height="2.3" fill="#f2dc30"/></svg>
<svg class="a" style="left:126.5px;top:393px;" width="8.64" height="10.799999999999999" viewBox="0 0 8.64 10.799999999999999"><g transform="scale(0.72)"><path d="M9.3 2.6 C8.6 0.8 6.8 0.4 5.2 0.6 C2.8 0.9 1.4 2.5 1.6 4.3 C1.8 6 3.5 6.9 5.5 6.9 C2.6 6.9 0.6 8.3 0.7 10.6 C0.8 12.8 3 14 5.5 13.9 C7.8 13.8 9.4 12.6 10.2 11" fill="none" stroke="#4e2a6e" stroke-width="1.9" stroke-linecap="round"/><circle cx="9.2" cy="2.4" r="1.4" fill="#4e2a6e"/><circle cx="10" cy="11.3" r="1.2" fill="#4e2a6e"/><path d="M4.5 6.9 H7.5" stroke="#4e2a6e" stroke-width="1.2"/></g></svg>
<svg class="a" style="left:133px;top:400px;" width="9" height="8" viewBox="0 0 9 8"><path d="M0.5 0.5 H8.5 V7.5 H0.5Z" fill="#888"/><path d="M0.5 0.5 L3 4 V7.5 M8.5 0.5 L6 4 V7.5" stroke="#ccc" stroke-width="0.8" fill="none"/></svg>
<svg class="a" style="left:147px;top:398px;" width="8" height="5" viewBox="0 0 8 5"><path d="M0 0 H8 L4 4.5Z" fill="#555"/></svg>
<svg class="a" style="left:163px;top:392px;" width="16" height="16" viewBox="0 0 16 16"><path d="M0.5 1 H12 M1.5 1 V14.5" stroke="#999" stroke-width="0.9"/><rect x="4" y="4.5" width="3" height="3" fill="#f7a21a"/><rect x="4" y="11.2" width="3" height="3" fill="#f7a21a"/><path d="M10.5 1 V9 H7 L11.5 14.8 L16 9 H12.5 V1Z" fill="#6c98c8" stroke="#2a4a6e" stroke-width="0.9" stroke-linejoin="round"/></svg>
<svg class="a" style="left:188px;top:392px;" width="16" height="16" viewBox="0 0 16 16"><path d="M0.5 1.5 H12 M1.5 1.5 V14.5" stroke="#999" stroke-width="0.9"/><rect x="4" y="5" width="3" height="3" fill="#f7a21a"/><rect x="4" y="11.2" width="3" height="3" fill="#f7a21a"/><path d="M10.5 14.5 V6.5 H7 L11.5 1 L16 6.5 H12.5 V14.5Z" fill="#6c98c8" stroke="#2a4a6e" stroke-width="0.9" stroke-linejoin="round"/></svg>
<svg class="a" style="left:213px;top:393px;" width="15" height="15" viewBox="0 0 15 15"><rect x="0.6" y="0.6" width="11.4" height="11" fill="#f0f0f0" stroke="#777" stroke-width="1.1"/><rect x="8" y="9" width="6.5" height="5.5" rx="1.5" fill="#e03a3a"/><path d="M9.5 11.75 H13" stroke="#fff" stroke-width="1.3"/></svg>
<svg class="a" style="left:886px;top:170px;" width="20" height="17" viewBox="0 0 20 17"><polygon points="11.00,5.50 9.01,6.95 9.39,9.39 6.95,9.01 5.50,11.00 4.05,9.01 1.61,9.39 1.99,6.95 0.00,5.50 1.99,4.05 1.61,1.61 4.05,1.99 5.50,0.00 6.95,1.99 9.39,1.61 9.01,4.05" fill="#d81818"/><circle cx="5.5" cy="5.5" r="1.3" fill="#f0f0f0"/><polygon points="15.70,8.00 14.18,9.11 14.47,10.97 12.61,10.68 11.50,12.20 10.39,10.68 8.53,10.97 8.82,9.11 7.30,8.00 8.82,6.89 8.53,5.03 10.39,5.32 11.50,3.80 12.61,5.32 14.47,5.03 14.18,6.89" fill="#666"/><circle cx="11.5" cy="8" r="1.1" fill="#f0f0f0"/><polygon points="9.80,13.00 8.62,13.88 8.83,15.33 7.38,15.12 6.50,16.30 5.62,15.12 4.17,15.33 4.38,13.88 3.20,13.00 4.38,12.12 4.17,10.67 5.62,10.88 6.50,9.70 7.38,10.88 8.83,10.67 8.62,12.12" fill="#7aa0d8"/><path d="M12 13 H18.5 L15.25 16.2Z" fill="#333"/></svg>
<svg class="a" style="left:912px;top:171px;" width="19" height="16" viewBox="0 0 19 16"><path d="M7.5 0.5 C4 0.5 4 2 4 3.5 V5 H8 V6 H2.5 C0.5 6 0.5 8 0.5 9.5 C0.5 11 1 12.5 3 12.5 H4.5 V10.5 C4.5 9 5.5 8 7 8 H10 C11.5 8 12 7 12 6 V3 C12 1.5 10.5 0.5 7.5 0.5Z" fill="#3a72b0"/><circle cx="6" cy="2.5" r="0.8" fill="#fff"/><path d="M7.5 15.5 C11 15.5 11 14 11 12.5 V11 H7 V10 H12.5 C14.5 10 14.5 8 14.5 6.5 C14.5 5 14 3.5 12 3.5 H10.5 V5.5 C10.5 7 9.5 8 8 8 H5 C3.5 8 3 9 3 10 V13 C3 14.5 4.5 15.5 7.5 15.5Z" fill="#f5cc30"/><path d="M12.5 12.5 H18.5 L15.5 15.5Z" fill="#333"/></svg>
<svg class="a" style="left:937px;top:171px;" width="16" height="16" viewBox="0 0 16 16"><circle cx="8" cy="7.5" r="7" fill="#f0f0f0" stroke="#666" stroke-width="1.1"/><path d="M8 3 V7.5 L11 10.5" fill="none" stroke="#666" stroke-width="1.1"/></svg>
<svg class="a" style="left:964px;top:171px;" width="13" height="16" viewBox="0 0 13 16"><path d="M0.6 0.6 H9 L12.4 4 V15.4 H0.6Z" fill="#f4f4f4" stroke="#bbb" stroke-width="1"/><path d="M2.5 5.5 H8 M2.5 7.8 H10.5 M2.5 10 H10.5 M2.5 12.3 H10.5" stroke="#aaa" stroke-width="1"/></svg>
<div class="a" style="left:987px;top:174px;width:1px;height:10px;background:#d8d8d8;"></div>
<div class="a" style="left:988px;top:174px;width:1px;height:10px;background:#fff;"></div>
<svg class="a" style="left:995px;top:172px;" width="15" height="15" viewBox="0 0 15 15"><rect x="0.6" y="0.6" width="10.5" height="10.5" rx="1.5" fill="#fbe24a" stroke="#c9a010" stroke-width="0.9"/><path d="M5.5 14 L6 11 L12.5 4 L14.5 6 L8 12.8Z" fill="#e8c030" stroke="#555" stroke-width="0.7"/></svg>
<div class="a" style="left:1018px;top:174px;width:1px;height:10px;background:#d8d8d8;"></div>
<div class="a" style="left:1019px;top:174px;width:1px;height:10px;background:#fff;"></div>
<svg class="a" style="left:1025px;top:171px;" width="18" height="16" viewBox="0 0 18 16"><path d="M7 6.5 L16.5 15" stroke="#5a5030" stroke-width="3.4"/><path d="M7.5 7 L16.2 14.7" stroke="#f0d070" stroke-width="2"/><path d="M2 1.5 A4 4 0 1 0 8 6.5 L6.3 4.8 L4.2 5.2 L3.8 3.2 Z" fill="#ddd" stroke="#555" stroke-width="0.9"/></svg>
<svg class="a" style="left:264px;top:462px;" width="12" height="17" viewBox="0 0 12 17"><path d="M1.5 15.5 L2 11.5 L9 1 L11.5 2.6 L4.5 13Z" fill="#e8d040" stroke="#7a6a20" stroke-width="0.8"/><path d="M1.5 15.5 L2 11.5 L4.5 13Z" fill="#555"/></svg>
<svg class="a" style="left:288px;top:463px;" width="15" height="15" viewBox="0 0 15 15"><rect x="0.5" y="2" width="13" height="3" rx="1" fill="#ddd8cc"/><rect x="0.5" y="6.5" width="13" height="3" rx="1" fill="#ddd8cc"/><rect x="0.5" y="11" width="13" height="3" rx="1" fill="#ddd8cc"/><path d="M5 14 L12 1.5" stroke="#c8c8c8" stroke-width="1.5"/></svg>
<svg class="a" style="left:312px;top:463px;" width="16" height="15" viewBox="0 0 16 15"><rect x="0.5" y="0.5" width="13" height="14" rx="1.5" fill="#e4e4e4" stroke="#d0d0d0"/><rect x="3" y="1" width="8" height="4.5" fill="#f4f4f4"/><rect x="3" y="9" width="7" height="5" fill="#f4f4f4"/><path d="M9 14 L15 7" stroke="#d8d0c0" stroke-width="1.5"/></svg>
<svg class="a" style="left:337.5px;top:463px;" width="14.5" height="14.5" viewBox="0 0 14.5 14.5"><g transform="scale(0.659)"><path d="M2 10 C2.5 4 8 1 13 2.5 C15 3 16.5 4 17.5 5 L20.5 2 V11 H11.5 L14.5 8 C12 5.5 7.5 6 6 10Z" fill="#4a86c8"/><path d="M20 13 C19.5 19 14 22 9 20.5 C7 20 5.5 19 4.5 18 L1.5 21 V12 H10.5 L7.5 15 C10 17.5 14.5 17 16 13Z" fill="#4a86c8"/></g></svg>
<div class="a" style="left:361px;top:464px;width:1px;height:12px;background:#d8d8d8;"></div>
<div class="a" style="left:362px;top:464px;width:1px;height:12px;background:#fff;"></div>
<svg class="a" style="left:370px;top:463px;" width="17" height="16" viewBox="0 0 17 16"><rect x="0.5" y="0.5" width="14" height="12" fill="#ececec" stroke="#d8d8d8"/><path d="M0.5 4 H14.5 M0.5 8 H14.5 M5 4 V12.5" stroke="#d4d4d4"/><rect x="9" y="8.5" width="6" height="6" fill="#c8c8c8"/><path d="M12 12 L16.5 15.5" stroke="#bbb"/></svg>
<svg class="a" style="left:395px;top:463px;" width="13" height="16" viewBox="0 0 13 16"><path d="M0.5 2.5 H12.5 M4.5 2.5 V0.8 H8.5 V2.5" stroke="#d8c8c8" stroke-width="1" fill="none"/><path d="M1.5 4 H11.5 L10.5 15 H2.5Z" fill="#e8dede" stroke="#d8c8c8" stroke-width="0.8"/><path d="M4.5 6 V13 M6.5 6 V13 M8.5 6 V13" stroke="#d0c0c0" stroke-width="0.8"/></svg>
<svg class="a" style="left:420px;top:464px;" width="15" height="12" viewBox="0 0 15 12"><path d="M1 1.5 L14 9 M1 9.5 L14 2" stroke="#bbb" stroke-width="1"/><circle cx="12" cy="2.5" r="2" fill="none" stroke="#bbb"/><circle cx="12" cy="9.5" r="2" fill="none" stroke="#bbb"/></svg>
<svg class="a" style="left:446px;top:463px;" width="12" height="16" viewBox="0 0 12 16"><rect x="3.5" y="0.5" width="8" height="10" fill="#eee" stroke="#ddd"/><rect x="0.5" y="4.5" width="8" height="11" fill="#e8e8e8" stroke="#d8d8d8"/></svg>
<svg class="a" style="left:471px;top:463px;" width="12" height="16" viewBox="0 0 12 16"><rect x="0.5" y="1.5" width="11" height="14" rx="1" fill="#e4e4e4" stroke="#d4d4d4"/><rect x="3" y="0.5" width="6" height="2.5" fill="#ddd"/><rect x="2.5" y="4.5" width="7" height="9" fill="#eee" stroke="#ddd" stroke-width="0.6"/></svg>
<div class="a" style="left:493px;top:464px;width:1px;height:12px;background:#d8d8d8;"></div>
<div class="a" style="left:494px;top:464px;width:1px;height:12px;background:#fff;"></div>
<svg class="a" style="left:502px;top:470px;overflow:visible;" width="14" height="9" viewBox="0 0 14 9"><rect x="3" y="0.5" width="10.5" height="8.5" rx="1.2" fill="#fbe24a" stroke="#c9a010" stroke-width="0.9"/></svg>
<svg class="a" style="left:502px;top:463px;" width="9.0" height="11.25" viewBox="0 0 9.0 11.25"><g transform="scale(0.75)"><path d="M9.3 2.6 C8.6 0.8 6.8 0.4 5.2 0.6 C2.8 0.9 1.4 2.5 1.6 4.3 C1.8 6 3.5 6.9 5.5 6.9 C2.6 6.9 0.6 8.3 0.7 10.6 C0.8 12.8 3 14 5.5 13.9 C7.8 13.8 9.4 12.6 10.2 11" fill="none" stroke="#4e2a6e" stroke-width="1.9" stroke-linecap="round"/><circle cx="9.2" cy="2.4" r="1.4" fill="#4e2a6e"/><circle cx="10" cy="11.3" r="1.2" fill="#4e2a6e"/><path d="M4.5 6.9 H7.5" stroke="#4e2a6e" stroke-width="1.2"/></g></svg>
<svg class="a" style="left:527px;top:464px;" width="14" height="15" viewBox="0 0 14 15"><rect x="0.5" y="0.5" width="13" height="3.8" rx="1.5" fill="#fbe24a" stroke="#c9a010" stroke-width="0.8"/><rect x="0.5" y="5.5" width="13" height="3.8" rx="1.5" fill="#fbe24a" stroke="#c9a010" stroke-width="0.8"/><rect x="0.5" y="10.5" width="13" height="3.8" rx="1.5" fill="#fbe24a" stroke="#c9a010" stroke-width="0.8"/></svg>
<svg class="a" style="left:552px;top:463px;" width="14" height="15" viewBox="0 0 14 15"><rect x="0.5" y="0.5" width="13" height="14" fill="#eee" stroke="#999" stroke-width="0.8"/><path d="M0.5 0.5 L13.5 14.5 H0.5Z" fill="#fbe24a" stroke="#c9a010" stroke-width="0.7"/><path d="M0.5 0.5 L13.5 14.5" stroke="#555" stroke-width="0.8"/></svg>
<svg class="a" style="left:577px;top:463px;" width="16" height="16" viewBox="0 0 16 16"><rect x="0.5" y="0.5" width="10" height="10" rx="1.5" fill="#fbe24a" stroke="#c9a010" stroke-width="0.9"/><rect x="8" y="8" width="7.5" height="7.5" rx="1.2" fill="#d41a1a"/><circle cx="11.75" cy="11.75" r="2.4" fill="none" stroke="#fff" stroke-width="0.8"/><path d="M10 13.5 L13.5 10" stroke="#fff" stroke-width="0.8"/></svg>
<svg class="a" style="left:602px;top:463px;" width="14" height="16" viewBox="0 0 14 16"><path d="M0.6 1 H13.4 L8.68 8.32 V15.4 L5.88 13.8 V8.32Z" fill="#6c98c8" stroke="#4a77aa" stroke-width="0.8" stroke-linejoin="round"/><rect x="1" y="1.1" width="12" height="2.3" fill="#f2dc30"/></svg>
<svg class="a" style="left:627px;top:463px;" width="15" height="15" viewBox="0 0 15 15"><rect x="0.5" y="0.5" width="14" height="14" rx="1" fill="#b0cce8" stroke="#6c98c8" stroke-width="0.9"/><path d="M2 5 H13 M2 8 H13" stroke="#fff" stroke-width="0.8"/><rect x="1" y="10.5" width="13" height="3.5" fill="#fbe24a"/><path d="M7.5 12 V3 M5 5 L7.5 2 L10 5" stroke="#3f6a9e" stroke-width="1.4" fill="none"/></svg>
<svg class="a" style="left:651px;top:463px;" width="16" height="16" viewBox="0 0 16 16"><rect x="2.5" y="2.5" width="10" height="10" fill="#fbe24a" stroke="#c9a010" stroke-width="0.8"/><path d="M8 0 L10.5 3 H5.5Z M8 16 L10.5 13 H5.5Z M0 8 L3 5.5 V10.5Z M16 8 L13 5.5 V10.5Z" fill="#5c8fc8"/><path d="M3.5 8 H12.5 M8 3.5 V12.5" stroke="#5c8fc8" stroke-width="2"/></svg>
<svg class="a" style="left:676px;top:463px;" width="17" height="17" viewBox="0 0 17 17"><rect x="0.5" y="1.5" width="7" height="10" fill="#fbe24a" stroke="#c9a010" stroke-width="0.8"/><path d="M5.2 11 L1 15.5" stroke="#3a3a2a" stroke-width="2.6"/><path d="M5 11.2 L1.2 15.3" stroke="#f4c936" stroke-width="1.5"/><circle cx="10" cy="6.5" r="5.8" fill="#f0ecd8" stroke="#555" stroke-width="1"/></svg>
<div class="a" style="left:700px;top:464px;width:1px;height:12px;background:#d8d8d8;"></div>
<div class="a" style="left:701px;top:464px;width:1px;height:12px;background:#fff;"></div>
<svg class="a" style="left:709px;top:463px;" width="16" height="16" viewBox="0 0 16 16"><rect x="0.5" y="0.5" width="13" height="13" fill="#eee" stroke="#ddd"/><path d="M4 0.5 V13.5 M0.5 4 H13.5 M0.5 8 H13.5" stroke="#ddd"/><rect x="9" y="9" width="7" height="7" rx="1" fill="#d8d8d8"/></svg>
<svg class="a" style="left:734px;top:463px;" width="16" height="16" viewBox="0 0 16 16"><rect x="0.5" y="0.5" width="13" height="13" fill="#eee" stroke="#ddd"/><path d="M4 0.5 V13.5 M0.5 4 H13.5 M0.5 8 H13.5" stroke="#ddd"/><rect x="9" y="9" width="7" height="7" rx="1" fill="#d8d8d8"/><path d="M10.5 10.5 L14.5 14.5 M14.5 10.5 L10.5 14.5" stroke="#fff"/></svg>
<svg class="a" style="left:759px;top:463px;" width="15" height="16" viewBox="0 0 15 16"><rect x="0.5" y="0.5" width="14" height="14" rx="1" fill="#a8c4e4" stroke="#6c98c8" stroke-width="0.9"/><path d="M2.5 5 H7 M2.5 8 H7 M2.5 11 H12" stroke="#fff" stroke-width="0.8"/><path d="M3.5 15 L4 12 L12 2 L14 3.5 L6 13.5Z" fill="#e8802a" stroke="#555" stroke-width="0.7"/></svg>
<svg class="a" style="left:784px;top:463px;" width="15" height="16" viewBox="0 0 15 16"><path d="M1 1 V14 M14 1 V14" stroke="#444" stroke-width="0.9"/><rect x="0" y="14" width="15" height="2" fill="#666"/><path d="M1 2.5 H14 M1 7 H14 M1 11.5 H14" stroke="#555" stroke-width="0.6"/><circle cx="5.5" cy="2.5" r="1.5" fill="#e88"/><circle cx="10.5" cy="2.5" r="1.5" fill="#e88"/><circle cx="4.5" cy="7" r="1.5" fill="#9d9"/><circle cx="8" cy="7" r="1.5" fill="#9d9"/><circle cx="4.5" cy="11.5" r="1.5" fill="#9bd"/><circle cx="8" cy="11.5" r="1.5" fill="#9bd"/><circle cx="11.5" cy="11.5" r="1.5" fill="#9bd"/></svg>
<div class="a" style="left:807px;top:464px;width:1px;height:12px;background:#d8d8d8;"></div>
<div class="a" style="left:808px;top:464px;width:1px;height:12px;background:#fff;"></div>
<svg class="a" style="left:815px;top:463px;" width="15" height="15" viewBox="0 0 15 15"><rect x="0.5" y="0.5" width="14" height="3.5" rx="1" fill="#fff" stroke="#999" stroke-width="0.7"/><path d="M7 2.25 H13" stroke="#333" stroke-width="1"/><rect x="0.5" y="5.5" width="14" height="3.5" rx="1" fill="#8ccc8c" stroke="#999" stroke-width="0.7"/><rect x="6" y="6.2" width="6" height="2" fill="#888"/><rect x="0.5" y="10.5" width="14" height="3.5" rx="1" fill="#fff" stroke="#999" stroke-width="0.7"/><path d="M2 12.25 H3.5 M5 12.25 H13" stroke="#e04040" stroke-width="1"/></svg>
<div class="a" style="left:839px;top:464px;width:1px;height:12px;background:#d8d8d8;"></div>
<div class="a" style="left:840px;top:464px;width:1px;height:12px;background:#fff;"></div>
<svg class="a" style="left:859px;top:468px;" width="10" height="7" viewBox="0 0 10 7"><path d="M0.8 0.8 L3.8 3.5 L0.8 6.2 M5 0.8 L8 3.5 L5 6.2" fill="none" stroke="#111" stroke-width="1.5"/></svg>
</body></html>
